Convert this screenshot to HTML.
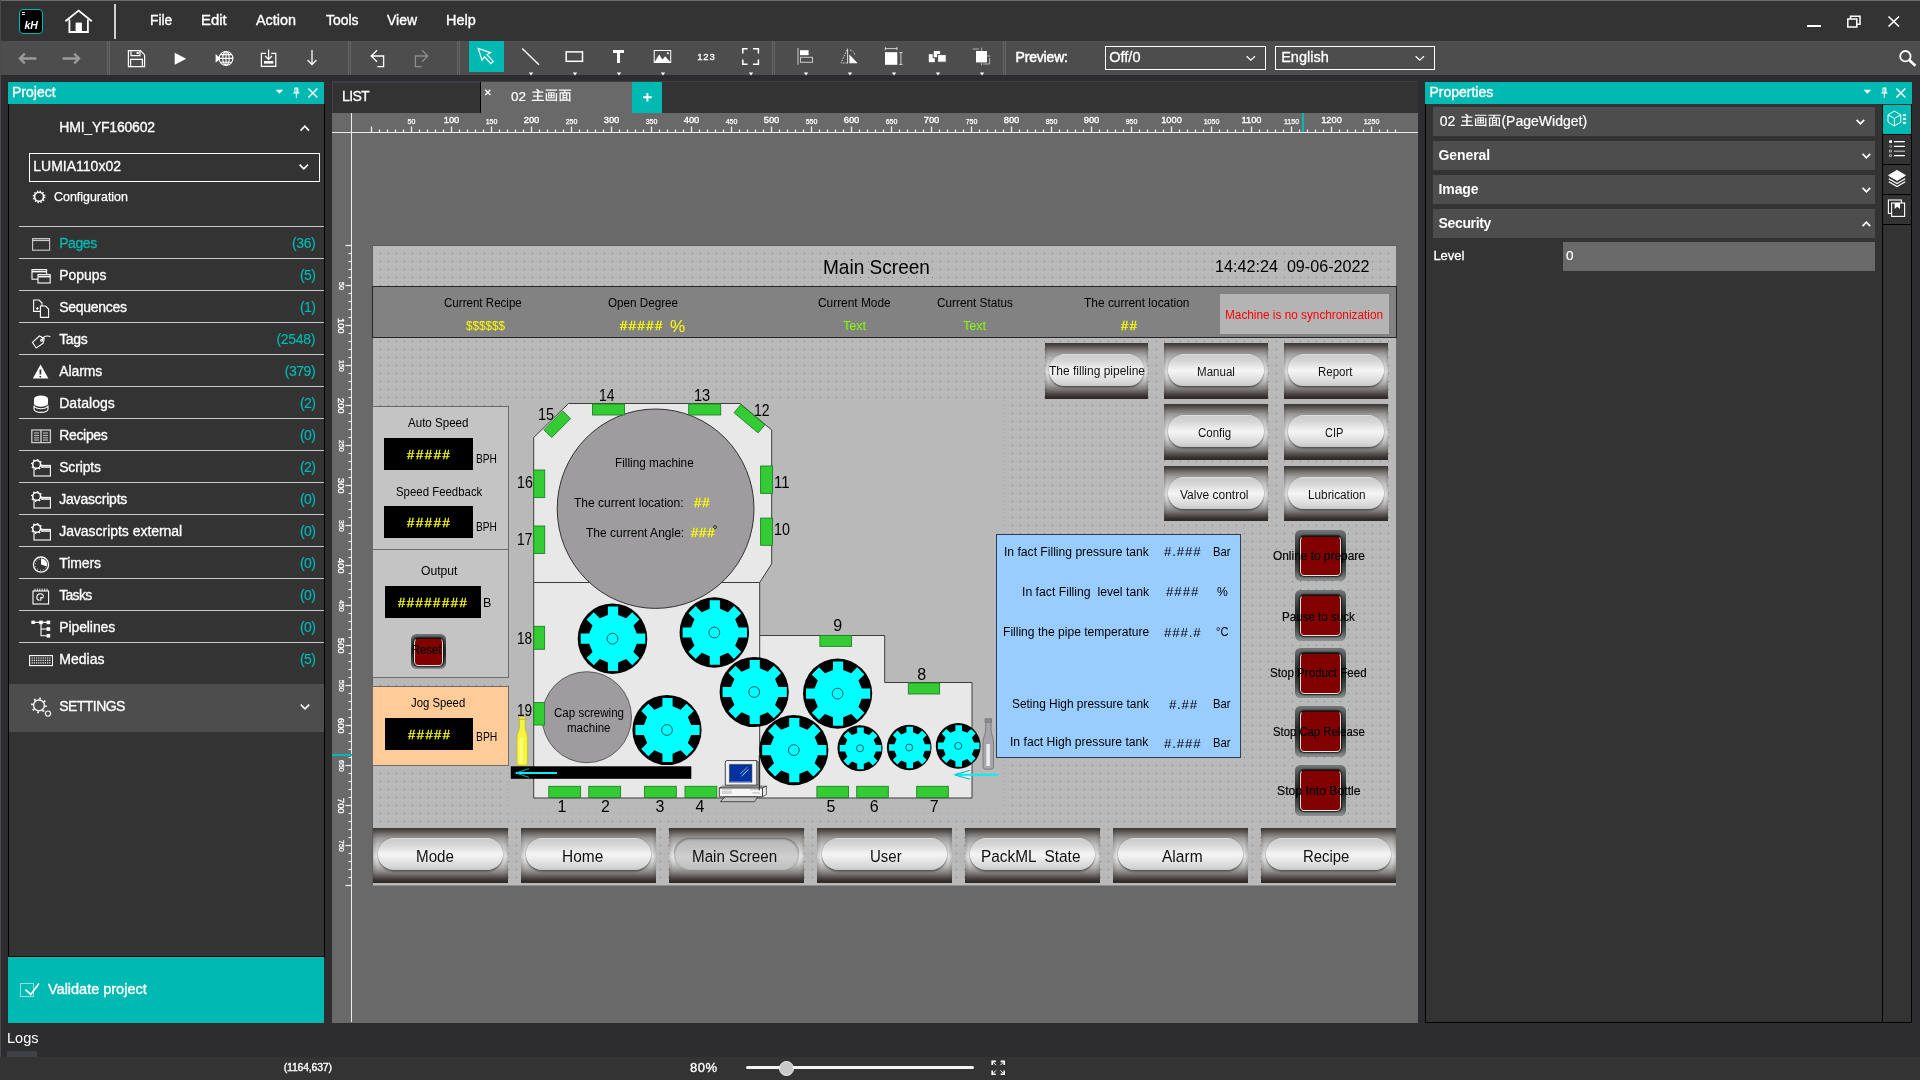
<!DOCTYPE html>
<html><head><meta charset="utf-8"><title>HMI Editor</title>
<style>
html,body{margin:0;padding:0;background:#2d2d30;overflow:hidden}
body{width:1920px;height:1080px;position:relative;font-family:"Liberation Sans",sans-serif}
.t{position:absolute;white-space:pre;display:block}
.r{position:absolute;box-sizing:border-box}
</style></head><body><div id="root" style="position:absolute;left:0;top:0;width:1920px;height:1080px;will-change:transform">
<div class="r" style="left:0px;top:0px;width:1920px;height:41px;background:#333333;"></div>
<div class="r" style="left:0px;top:0px;width:1920px;height:1px;background:#6a6a6a;"></div>
<div class="r" style="left:0px;top:41px;width:1920px;height:34px;background:#4d4d4d;"></div>
<div class="r" style="left:0px;top:0px;width:1px;height:1080px;background:#4a4a4a;"></div>
<div class="r" style="left:19px;top:9px;width:24px;height:25px;background:#000;border:1px solid #00b9b3;border-radius:4px"></div>
<span class="t" style="left:24.50px;top:20.05px;font:700 10.5px/1 'Liberation Sans',sans-serif;color:#fff;font-style:italic;">kH</span>
<div class="r" style="left:22px;top:12px;width:3px;height:1px;background:#ddd;"></div>
<div class="r" style="left:22px;top:14px;width:3px;height:1px;background:#ddd;"></div>
<svg class="r" style="left:62px;top:6px;" width="34" height="30" viewBox="0 0 34 30"><g fill="none" stroke="#fff" stroke-width="1.8" stroke-linejoin="miter"><path d="M3.4,15.2 L16.6,4.6 L29.8,15.2"/><path d="M7.4,13.5 V26 H25.9 V13.5"/></g><rect x="13.6" y="16.6" width="6.3" height="9" fill="#fff"/></svg>
<div class="r" style="left:114px;top:4px;width:2px;height:35px;background:#d0d0d0;"></div>
<span class="t" style="left:150.30px;top:12.95px;font:400 14.5px/1 'Liberation Sans',sans-serif;color:#fff;-webkit-text-stroke:0.35px #fff;transform-origin:0 0;transform:scaleX(0.9544);">File</span>
<span class="t" style="left:201.00px;top:12.95px;font:400 14.5px/1 'Liberation Sans',sans-serif;color:#fff;-webkit-text-stroke:0.35px #fff;transform-origin:0 0;transform:scaleX(1.0286);">Edit</span>
<span class="t" style="left:256.00px;top:12.95px;font:400 14.5px/1 'Liberation Sans',sans-serif;color:#fff;-webkit-text-stroke:0.35px #fff;transform-origin:0 0;transform:scaleX(0.9926);">Action</span>
<span class="t" style="left:325.70px;top:12.95px;font:400 14.5px/1 'Liberation Sans',sans-serif;color:#fff;-webkit-text-stroke:0.35px #fff;transform-origin:0 0;transform:scaleX(0.9631);">Tools</span>
<span class="t" style="left:386.70px;top:12.95px;font:400 14.5px/1 'Liberation Sans',sans-serif;color:#fff;-webkit-text-stroke:0.35px #fff;transform-origin:0 0;transform:scaleX(0.9626);">View</span>
<span class="t" style="left:446.00px;top:12.95px;font:400 14.5px/1 'Liberation Sans',sans-serif;color:#fff;-webkit-text-stroke:0.35px #fff;transform-origin:0 0;transform:scaleX(0.9959);">Help</span>
<div class="r" style="left:1807px;top:25px;width:14px;height:2px;background:#fff;"></div>
<svg class="r" style="left:1846px;top:14px;" width="16" height="15" viewBox="0 0 16 15"><g fill="none" stroke="#fff" stroke-width="1.5"><rect x="1.8" y="5" width="9" height="8"/><path d="M4.5,5 V2.3 H14 V10.3 H10.8"/></g></svg>
<svg class="r" style="left:1887px;top:15px;" width="14" height="13" viewBox="0 0 14 13"><path d="M1.5,1.5 L12,11.5 M12,1.5 L1.5,11.5" stroke="#fff" stroke-width="1.7" fill="none"/></svg>
<div class="r" style="left:107px;top:41px;width:1px;height:34px;background:#666;"></div>
<div class="r" style="left:109px;top:41px;width:1px;height:34px;background:#666;"></div>
<div class="r" style="left:348px;top:41px;width:1px;height:34px;background:#666;"></div>
<div class="r" style="left:350px;top:41px;width:1px;height:34px;background:#666;"></div>
<div class="r" style="left:457px;top:41px;width:1px;height:34px;background:#666;"></div>
<div class="r" style="left:459px;top:41px;width:1px;height:34px;background:#666;"></div>
<div class="r" style="left:772px;top:41px;width:1px;height:34px;background:#666;"></div>
<div class="r" style="left:774px;top:41px;width:1px;height:34px;background:#666;"></div>
<div class="r" style="left:1003px;top:41px;width:1px;height:34px;background:#666;"></div>
<div class="r" style="left:1005px;top:41px;width:1px;height:34px;background:#666;"></div>
<svg class="r" style="left:17px;top:51px;" width="21" height="15" viewBox="0 0 21 15"><path d="M19.4,7.5 H3.4 M7.8,2.6 L2.9,7.5 L7.8,12.4" fill="none" stroke="#9a9a9a" stroke-width="2.3"/></svg>
<svg class="r" style="left:61px;top:51px;" width="21" height="15" viewBox="0 0 21 15"><path d="M1.6,7.5 H17.6 M13.2,2.6 L18.1,7.5 L13.2,12.4" fill="none" stroke="#9a9a9a" stroke-width="2.3"/></svg>
<svg class="r" style="left:126px;top:48px;" width="21" height="21" viewBox="0 0 21 21"><g fill="none" stroke="#fff" stroke-width="1.2"><path d="M2.4,2.6 H14.3 L18.6,6.9 V18.6 H2.4 Z"/><path d="M5,2.6 V7.6 H14 V2.6"/><path d="M4.6,18.6 V11.4 H16.4 V18.6"/></g><rect x="10.6" y="4" width="2.2" height="2" fill="#fff"/></svg>
<svg class="r" style="left:173px;top:51px;" width="15" height="15" viewBox="0 0 15 15"><path d="M1.7,1.7 L13.2,7.7 L1.7,13.7 Z" fill="#fff"/></svg>
<svg class="r" style="left:214px;top:49px;" width="21" height="19" viewBox="0 0 21 19"><path d="M1.6,5 L6.6,9.4 L1.6,13.8 Z" fill="#fff"/><g fill="none" stroke="#fff" stroke-width="1.1"><circle cx="12" cy="9.4" r="6.9"/><ellipse cx="12" cy="9.4" rx="3.2" ry="6.9"/><path d="M12,2.5 V16.3 M5.1,9.4 H18.9 M6.3,5.6 H17.7 M6.3,13.2 H17.7"/></g></svg>
<svg class="r" style="left:259px;top:48px;" width="19" height="20" viewBox="0 0 19 20"><g fill="none" stroke="#fff" stroke-width="1.2"><path d="M7,5.3 H2.4 V18.4 H16.8 V5.3 H12.2"/><path d="M9.6,1.6 V11.2 M6.2,8 L9.6,11.4 L13,8"/></g><rect x="5" y="13" width="9.3" height="2.6" fill="#fff"/></svg>
<svg class="r" style="left:305px;top:48px;" width="14" height="19" viewBox="0 0 14 19"><path d="M7,2 V16.5 M2.6,12 L7,16.6 L11.4,12" fill="none" stroke="#fff" stroke-width="1.3"/></svg>
<svg class="r" style="left:369px;top:48px;" width="17" height="21" viewBox="0 0 17 21"><path d="M2.4,8 H14.6 V18.6 H8.3 M8,2.2 L2.2,8 L8,13.8" fill="none" stroke="#fff" stroke-width="1.3"/></svg>
<svg class="r" style="left:413px;top:48px;" width="17" height="21" viewBox="0 0 17 21"><path d="M14.6,8 H2.4 V18.6 H8.7 M9,2.2 L14.8,8 L9,13.8" fill="none" stroke="#8c8c8c" stroke-width="1.3"/></svg>
<div class="r" style="left:469px;top:41px;width:35px;height:31px;background:#00b9b3;"></div>
<svg class="r" style="left:475px;top:45px;" width="23" height="23" viewBox="0 0 23 23"><path d="M3.2,3.4 L7,15.2 L9.6,11.8 L15.8,18.6 L18.2,16.4 L12,9.6 L15.6,7.6 Z" fill="none" stroke="#fff" stroke-width="1.2" stroke-linejoin="miter"/></svg>
<svg class="r" style="left:520px;top:46px;" width="22" height="22" viewBox="0 0 22 22"><path d="M2.2,2.6 L19,18.8" stroke="#fff" stroke-width="1.4"/></svg>
<svg class="r" style="left:564px;top:49px;" width="21" height="15" viewBox="0 0 21 15"><rect x="2.2" y="2.9" width="16.3" height="9.4" fill="none" stroke="#fff" stroke-width="1.5"/></svg>
<div class="r" style="left:613px;top:50px;width:11.3px;height:2.8px;background:#fff;"></div>
<div class="r" style="left:617.3px;top:50px;width:2.7px;height:12.8px;background:#fff;"></div>
<svg class="r" style="left:652px;top:48px;" width="21" height="17" viewBox="0 0 21 17"><rect x="2.2" y="2.5" width="16.5" height="12" fill="none" stroke="#fff" stroke-width="1"/><path d="M2.4,14.4 L7.2,6.6 L10.4,11.4 L13.2,8.2 L18.5,14.4 Z" fill="#fff"/><circle cx="15.8" cy="5.2" r="1" fill="#fff"/></svg>
<span class="t" style="left:697.30px;top:51.75px;font:400 9.5px/1 'Liberation Sans',sans-serif;color:#fff;letter-spacing:0.783px;-webkit-text-stroke:0.3px #fff;">123</span>
<svg class="r" style="left:741px;top:47px;" width="20" height="19" viewBox="0 0 20 19"><path d="M1.8,6.4 V1.8 H6.6 M12,1.8 H17.4 V6.4 M17.4,12.4 V17.2 H12 M6.6,17.2 H1.8 V12.4" fill="none" stroke="#fff" stroke-width="1.5"/></svg>
<svg class="r" style="left:796px;top:47px;" width="19" height="19" viewBox="0 0 19 19"><path d="M2,1 V17.8" stroke="#ccc" stroke-width="1"/><rect x="4" y="3.2" width="8.6" height="5" fill="#fff"/><rect x="4.5" y="10.3" width="12" height="5" fill="none" stroke="#ccc" stroke-width="1"/></svg>
<svg class="r" style="left:839px;top:47px;" width="21" height="19" viewBox="0 0 21 19"><path d="M7.8,3 L2,16 H7.8" fill="none" stroke="#ddd" stroke-width="1" stroke-dasharray="1.5,1.2"/><path d="M8.6,1.6 V16.6" stroke="#ddd" stroke-width="1"/><path d="M10.4,7.6 V16.2 H18.6 Z" fill="#fff"/><path d="M11,3 C14,3.6 15.4,5.6 15.8,8" fill="none" stroke="#ddd" stroke-width="0.9" stroke-dasharray="1.5,1.2"/></svg>
<svg class="r" style="left:883px;top:46px;" width="21" height="20" viewBox="0 0 21 20"><rect x="2" y="6.2" width="12.3" height="12.6" fill="#fff"/><path d="M2,2.6 H14.3 M2.4,1 V4.2 M13.9,1 V4.2 M17.9,6.2 V18.8 M16.2,6.6 H19.6 M16.2,18.4 H19.6" stroke="#ddd" stroke-width="0.9" fill="none"/></svg>
<svg class="r" style="left:927px;top:49px;" width="21" height="15" viewBox="0 0 21 15"><rect x="1.8" y="5.2" width="6" height="8" fill="#fff"/><rect x="6.2" y="1.6" width="7.4" height="7.2" fill="#fff" stroke="#4d4d4d" stroke-width="1"/><rect x="10.6" y="5.6" width="8.6" height="7.6" fill="#fff" stroke="#4d4d4d" stroke-width="1"/></svg>
<svg class="r" style="left:971px;top:46px;" width="21" height="20" viewBox="0 0 21 20"><rect x="5" y="5" width="11" height="11.4" fill="#fff"/><path d="M10.6,1.6 V5 M1.6,3 H8 M16,10 H19.4 M10.4,16.4 V19.4 M12,18 H18.6 V12" stroke="#bbb" stroke-width="0.9" fill="none"/></svg>
<svg class="r" style="left:528px;top:71.8px;" width="6" height="4" viewBox="0 0 6 4"><path d="M0.8,0.6 H5.2 L3,3.6 Z" fill="#fff"/></svg>
<svg class="r" style="left:572px;top:71.8px;" width="6" height="4" viewBox="0 0 6 4"><path d="M0.8,0.6 H5.2 L3,3.6 Z" fill="#fff"/></svg>
<svg class="r" style="left:615.8px;top:71.8px;" width="6" height="4" viewBox="0 0 6 4"><path d="M0.8,0.6 H5.2 L3,3.6 Z" fill="#fff"/></svg>
<svg class="r" style="left:660px;top:71.8px;" width="6" height="4" viewBox="0 0 6 4"><path d="M0.8,0.6 H5.2 L3,3.6 Z" fill="#fff"/></svg>
<svg class="r" style="left:747.8px;top:71.8px;" width="6" height="4" viewBox="0 0 6 4"><path d="M0.8,0.6 H5.2 L3,3.6 Z" fill="#fff"/></svg>
<svg class="r" style="left:802.8px;top:71.8px;" width="6" height="4" viewBox="0 0 6 4"><path d="M0.8,0.6 H5.2 L3,3.6 Z" fill="#fff"/></svg>
<svg class="r" style="left:847px;top:71.8px;" width="6" height="4" viewBox="0 0 6 4"><path d="M0.8,0.6 H5.2 L3,3.6 Z" fill="#fff"/></svg>
<svg class="r" style="left:891px;top:71.8px;" width="6" height="4" viewBox="0 0 6 4"><path d="M0.8,0.6 H5.2 L3,3.6 Z" fill="#fff"/></svg>
<svg class="r" style="left:935px;top:71.8px;" width="6" height="4" viewBox="0 0 6 4"><path d="M0.8,0.6 H5.2 L3,3.6 Z" fill="#fff"/></svg>
<svg class="r" style="left:979px;top:71.8px;" width="6" height="4" viewBox="0 0 6 4"><path d="M0.8,0.6 H5.2 L3,3.6 Z" fill="#fff"/></svg>
<span class="t" style="left:1015.50px;top:49.80px;font:400 14px/1 'Liberation Sans',sans-serif;color:#fff;letter-spacing:-0.173px;-webkit-text-stroke:0.5px #fff;">Preview:</span>
<div class="r" style="left:1105px;top:46px;width:160.5px;height:24px;border:1px solid #fff;background:#4d4d4d"></div>
<span class="t" style="left:1109.30px;top:49.75px;font:400 14.5px/1 'Liberation Sans',sans-serif;color:#fff;-webkit-text-stroke:0.3px #fff;">Off/0</span>
<svg class="r" style="left:1244.5px;top:55px;" width="12" height="7" viewBox="0 0 12 7"><path d="M1.6,1.2 L5.8,5.2 L10,1.2" fill="none" stroke="#fff" stroke-width="1.2"/></svg>
<div class="r" style="left:1275px;top:46px;width:160px;height:24px;border:1px solid #fff;background:#4d4d4d"></div>
<span class="t" style="left:1281.20px;top:49.75px;font:400 14.5px/1 'Liberation Sans',sans-serif;color:#fff;-webkit-text-stroke:0.3px #fff;">English</span>
<svg class="r" style="left:1414px;top:55px;" width="12" height="7" viewBox="0 0 12 7"><path d="M1.6,1.2 L5.8,5.2 L10,1.2" fill="none" stroke="#fff" stroke-width="1.2"/></svg>
<svg class="r" style="left:1898px;top:49px;" width="20" height="19" viewBox="0 0 20 19"><circle cx="7.4" cy="7.2" r="5.2" fill="none" stroke="#fff" stroke-width="1.8"/><path d="M11.2,11 L17.4,16.8" stroke="#fff" stroke-width="2.6"/></svg>
<div class="r" style="left:8px;top:82px;width:316px;height:22px;background:#00b9b3;"></div>
<span class="t" style="left:12.00px;top:84.80px;font:400 14px/1 'Liberation Sans',sans-serif;color:#fff;-webkit-text-stroke:0.35px #fff;">Project</span>
<svg class="r" style="left:275px;top:89px;" width="9" height="6" viewBox="0 0 9 6"><path d="M0.6,0.8 H8.2 L4.4,4.8 Z" fill="#fff"/></svg>
<svg class="r" style="left:292px;top:87px;" width="9" height="12" viewBox="0 0 9 12"><path d="M2.6,1 H6.2 M3,1 V5.6 M5.8,1 V5.6 M1.2,6 H7.6 M4.4,6 V11" stroke="#fff" stroke-width="1.1" fill="none"/><rect x="4.4" y="1" width="1.6" height="5" fill="#fff"/></svg>
<svg class="r" style="left:307px;top:87px;" width="12" height="12" viewBox="0 0 12 12"><path d="M1.4,1.4 L10.4,10.4 M10.4,1.4 L1.4,10.4" stroke="#fff" stroke-width="1.4"/></svg>
<div class="r" style="left:8px;top:104px;width:317px;height:853px;background:#333;border:1px solid #000;border-top:none"></div>
<span class="t" style="left:59.30px;top:119.80px;font:400 14px/1 'Liberation Sans',sans-serif;color:#fff;letter-spacing:-0.213px;-webkit-text-stroke:0.3px #fff;">HMI_YF160602</span>
<svg class="r" style="left:299px;top:124px;" width="12" height="8" viewBox="0 0 12 8"><path d="M1.6,6.6 L5.8,2.2 L10,6.6" fill="none" stroke="#fff" stroke-width="1.6"/></svg>
<div class="r" style="left:29px;top:153px;width:291px;height:28.5px;border:1px solid #fff"></div>
<span class="t" style="left:33.30px;top:159.00px;font:400 14px/1 'Liberation Sans',sans-serif;color:#fff;-webkit-text-stroke:0.3px #fff;">LUMIA110x02</span>
<svg class="r" style="left:298px;top:163px;" width="12" height="8" viewBox="0 0 12 8"><path d="M1.6,1.6 L5.8,5.8 L10,1.6" fill="none" stroke="#fff" stroke-width="1.6"/></svg>
<svg class="r" style="left:31px;top:189px;" width="16" height="16" viewBox="0 0 16 16"><circle cx="8.06" cy="7.75" r="4.5" fill="none" stroke="#fff" stroke-width="1.7"/><circle cx="8.06" cy="7.75" r="5.75" fill="none" stroke="#fff" stroke-width="1.3" stroke-dasharray="1.35,1.66"/></svg>
<span class="t" style="left:54.20px;top:189.70px;font:400 13.2px/1 'Liberation Sans',sans-serif;color:#fff;-webkit-text-stroke:0.25px #fff;transform-origin:0 0;transform:scaleX(0.9425);">Configuration</span>
<div class="r" style="left:19px;top:226px;width:305px;height:1.4px;background:#c8c8c8;"></div>
<span class="t" style="left:59.20px;top:236.20px;font:400 14px/1 'Liberation Sans',sans-serif;color:#00b9b3;letter-spacing:-0.419px;-webkit-text-stroke:0.3px #00b9b3;">Pages</span>
<span class="t" style="left:292.10px;top:236.20px;font:400 14px/1 'Liberation Sans',sans-serif;color:#00b9b3;letter-spacing:-0.449px;-webkit-text-stroke:0.15px #00b9b3;">(36)</span>
<svg class="r" style="left:31px;top:234.5px;" width="24" height="20" viewBox="0 0 24 20"><rect x="1.6" y="3.6" width="17" height="11.6" fill="none" stroke="#ccc" stroke-width="1.1"/><path d="M1.6,5.4 H18.6" stroke="#ccc" stroke-width="1.4"/></svg>
<div class="r" style="left:19px;top:258px;width:305px;height:1.4px;background:#c8c8c8;"></div>
<span class="t" style="left:59.20px;top:268.20px;font:400 14px/1 'Liberation Sans',sans-serif;color:#fff;letter-spacing:-0.014px;-webkit-text-stroke:0.3px #fff;">Popups</span>
<span class="t" style="left:300.10px;top:268.20px;font:400 14px/1 'Liberation Sans',sans-serif;color:#00b9b3;letter-spacing:-0.670px;-webkit-text-stroke:0.15px #00b9b3;">(5)</span>
<svg class="r" style="left:31px;top:266.5px;" width="24" height="20" viewBox="0 0 24 20"><rect x="1" y="2.6" width="14.6" height="9.6" stroke="#fff" fill="none" stroke-width="1.1"/><path d="M1,4.6 H15.6" stroke="#fff" stroke-width="1.6"/><rect x="7" y="7.6" width="12.2" height="8.4" fill="#333" stroke="#fff" stroke-width="1.1"/><path d="M7,9.6 H19.2" stroke="#fff" stroke-width="1.6"/></svg>
<div class="r" style="left:19px;top:290px;width:305px;height:1.4px;background:#c8c8c8;"></div>
<span class="t" style="left:59.20px;top:300.20px;font:400 14px/1 'Liberation Sans',sans-serif;color:#fff;letter-spacing:-0.284px;-webkit-text-stroke:0.3px #fff;">Sequences</span>
<span class="t" style="left:300.10px;top:300.20px;font:400 14px/1 'Liberation Sans',sans-serif;color:#00b9b3;letter-spacing:-0.670px;-webkit-text-stroke:0.15px #00b9b3;">(1)</span>
<svg class="r" style="left:31px;top:298.5px;" width="24" height="20" viewBox="0 0 24 20"><path d="M2.6,1 H8 L11,4 V12.4 H2.6 Z" stroke="#fff" fill="none" stroke-width="1.1"/><path d="M9.4,7 H14.6 L17.6,10 V18.4 H9.4 Z" fill="#333" stroke="#fff" stroke-width="1.1"/><path d="M5,9.4 H7.6 M6.3,8 V10.8" stroke="#fff" stroke-width="1"/></svg>
<div class="r" style="left:19px;top:322px;width:305px;height:1.4px;background:#c8c8c8;"></div>
<span class="t" style="left:59.20px;top:332.20px;font:400 14px/1 'Liberation Sans',sans-serif;color:#fff;letter-spacing:-0.368px;-webkit-text-stroke:0.3px #fff;">Tags</span>
<span class="t" style="left:276.40px;top:332.20px;font:400 14px/1 'Liberation Sans',sans-serif;color:#00b9b3;letter-spacing:-0.278px;-webkit-text-stroke:0.15px #00b9b3;">(2548)</span>
<svg class="r" style="left:31px;top:330.5px;" width="24" height="20" viewBox="0 0 24 20"><path d="M1.4,11.4 L8.4,5 L13.2,7.4 L12.2,12.2 L5.2,17 Z" stroke="#fff" fill="none" stroke-width="1.1"/><circle cx="10.6" cy="9.2" r="1" stroke="#fff" fill="none" stroke-width="1.1"/><path d="M10.8,8.8 C12,5 16,4.4 19.4,5.6" stroke="#fff" fill="none" stroke-width="1.1"/></svg>
<div class="r" style="left:19px;top:354px;width:305px;height:1.4px;background:#c8c8c8;"></div>
<span class="t" style="left:59.20px;top:364.20px;font:400 14px/1 'Liberation Sans',sans-serif;color:#fff;letter-spacing:-0.093px;-webkit-text-stroke:0.3px #fff;">Alarms</span>
<span class="t" style="left:284.70px;top:364.20px;font:400 14px/1 'Liberation Sans',sans-serif;color:#00b9b3;letter-spacing:-0.437px;-webkit-text-stroke:0.15px #00b9b3;">(379)</span>
<svg class="r" style="left:31px;top:362.5px;" width="24" height="20" viewBox="0 0 24 20"><path d="M9.6,1.6 L17.4,15.4 H1.8 Z" fill="#fff"/><path d="M9.4,6.4 V11.6 M9.4,13 V14.6" stroke="#333" stroke-width="1.7"/></svg>
<div class="r" style="left:19px;top:386px;width:305px;height:1.4px;background:#c8c8c8;"></div>
<span class="t" style="left:59.20px;top:396.20px;font:400 14px/1 'Liberation Sans',sans-serif;color:#fff;letter-spacing:0.056px;-webkit-text-stroke:0.3px #fff;">Datalogs</span>
<span class="t" style="left:300.10px;top:396.20px;font:400 14px/1 'Liberation Sans',sans-serif;color:#00b9b3;letter-spacing:-0.670px;-webkit-text-stroke:0.15px #00b9b3;">(2)</span>
<svg class="r" style="left:31px;top:394.5px;" width="24" height="20" viewBox="0 0 24 20"><ellipse cx="10" cy="3.8" rx="7" ry="3.2" fill="#fff"/><path d="M3,3.8 V8.6 A7,3.2 0 0 0 17,8.6 V3.8" fill="#fff"/><path d="M3,10.6 V14.2 A7,3.2 0 0 0 17,14.2 V10.6 A7,3.2 0 0 1 3,10.6Z" fill="none" stroke="#fff" stroke-width="1.1"/></svg>
<div class="r" style="left:19px;top:418px;width:305px;height:1.4px;background:#c8c8c8;"></div>
<span class="t" style="left:59.20px;top:428.20px;font:400 14px/1 'Liberation Sans',sans-serif;color:#fff;letter-spacing:-0.326px;-webkit-text-stroke:0.3px #fff;">Recipes</span>
<span class="t" style="left:300.10px;top:428.20px;font:400 14px/1 'Liberation Sans',sans-serif;color:#00b9b3;letter-spacing:-0.670px;-webkit-text-stroke:0.15px #00b9b3;">(0)</span>
<svg class="r" style="left:31px;top:426.5px;" width="24" height="20" viewBox="0 0 24 20"><rect x="0.8" y="3" width="18.6" height="12.6" fill="none" stroke="#ccc" stroke-width="1.3"/><path d="M10,3 V15.6" stroke="#ccc" stroke-width="1.4"/><path d="M3,6 H8 M3,8.4 H8 M3,10.8 H8 M3,13 H8 M12,6 H17 M12,8.4 H17 M12,10.8 H17 M12,13 H17" stroke="#ccc" stroke-width="1"/></svg>
<div class="r" style="left:19px;top:450px;width:305px;height:1.4px;background:#c8c8c8;"></div>
<span class="t" style="left:59.20px;top:460.20px;font:400 14px/1 'Liberation Sans',sans-serif;color:#fff;letter-spacing:-0.155px;-webkit-text-stroke:0.3px #fff;">Scripts</span>
<span class="t" style="left:300.10px;top:460.20px;font:400 14px/1 'Liberation Sans',sans-serif;color:#00b9b3;letter-spacing:-0.670px;-webkit-text-stroke:0.15px #00b9b3;">(2)</span>
<svg class="r" style="left:31px;top:458.5px;" width="24" height="20" viewBox="0 0 24 20"><rect x="3" y="6.4" width="16.4" height="10.6" stroke="#fff" fill="none" stroke-width="1.1"/><path d="M10,8 H19" stroke="#fff" stroke-width="1.5"/><circle cx="5.6" cy="5.4" r="3.9" fill="#333" stroke="#fff" stroke-width="1.5"/><circle cx="5.6" cy="5.4" r="5" fill="none" stroke="#fff" stroke-width="1.4" stroke-dasharray="1.3,2.6"/></svg>
<div class="r" style="left:19px;top:482px;width:305px;height:1.4px;background:#c8c8c8;"></div>
<span class="t" style="left:59.20px;top:492.20px;font:400 14px/1 'Liberation Sans',sans-serif;color:#fff;letter-spacing:-0.184px;-webkit-text-stroke:0.3px #fff;">Javascripts</span>
<span class="t" style="left:300.10px;top:492.20px;font:400 14px/1 'Liberation Sans',sans-serif;color:#00b9b3;letter-spacing:-0.670px;-webkit-text-stroke:0.15px #00b9b3;">(0)</span>
<svg class="r" style="left:31px;top:490.5px;" width="24" height="20" viewBox="0 0 24 20"><rect x="3" y="6.4" width="16.4" height="10.6" stroke="#fff" fill="none" stroke-width="1.1"/><path d="M10,8 H19" stroke="#fff" stroke-width="1.5"/><circle cx="5.6" cy="5.4" r="3.9" fill="#333" stroke="#fff" stroke-width="1.5"/><circle cx="5.6" cy="5.4" r="5" fill="none" stroke="#fff" stroke-width="1.4" stroke-dasharray="1.3,2.6"/></svg>
<div class="r" style="left:19px;top:514px;width:305px;height:1.4px;background:#c8c8c8;"></div>
<span class="t" style="left:59.20px;top:524.20px;font:400 14px/1 'Liberation Sans',sans-serif;color:#fff;letter-spacing:-0.036px;-webkit-text-stroke:0.3px #fff;">Javascripts external</span>
<span class="t" style="left:300.10px;top:524.20px;font:400 14px/1 'Liberation Sans',sans-serif;color:#00b9b3;letter-spacing:-0.670px;-webkit-text-stroke:0.15px #00b9b3;">(0)</span>
<svg class="r" style="left:31px;top:522.5px;" width="24" height="20" viewBox="0 0 24 20"><rect x="3" y="6.4" width="16.4" height="10.6" stroke="#fff" fill="none" stroke-width="1.1"/><path d="M10,8 H19" stroke="#fff" stroke-width="1.5"/><circle cx="5.6" cy="5.4" r="3.9" fill="#333" stroke="#fff" stroke-width="1.5"/><circle cx="5.6" cy="5.4" r="5" fill="none" stroke="#fff" stroke-width="1.4" stroke-dasharray="1.3,2.6"/></svg>
<div class="r" style="left:19px;top:546px;width:305px;height:1.4px;background:#c8c8c8;"></div>
<span class="t" style="left:59.20px;top:556.20px;font:400 14px/1 'Liberation Sans',sans-serif;color:#fff;letter-spacing:-0.092px;-webkit-text-stroke:0.3px #fff;">Timers</span>
<span class="t" style="left:300.10px;top:556.20px;font:400 14px/1 'Liberation Sans',sans-serif;color:#00b9b3;letter-spacing:-0.670px;-webkit-text-stroke:0.15px #00b9b3;">(0)</span>
<svg class="r" style="left:31px;top:554.5px;" width="24" height="20" viewBox="0 0 24 20"><circle cx="10" cy="9.6" r="7.6" fill="none" stroke="#fff" stroke-width="1.3"/><path d="M10,9.6 L10,3.4 A6.2,6.2 0 0 1 15.8,11.6 Z" fill="#fff"/><circle cx="10" cy="9.6" r="5.6" fill="none" stroke="#fff" stroke-width="1" stroke-dasharray="0.8,2.13"/></svg>
<div class="r" style="left:19px;top:578px;width:305px;height:1.4px;background:#c8c8c8;"></div>
<span class="t" style="left:59.20px;top:588.20px;font:400 14px/1 'Liberation Sans',sans-serif;color:#fff;letter-spacing:-0.697px;-webkit-text-stroke:0.3px #fff;">Tasks</span>
<span class="t" style="left:300.10px;top:588.20px;font:400 14px/1 'Liberation Sans',sans-serif;color:#00b9b3;letter-spacing:-0.670px;-webkit-text-stroke:0.15px #00b9b3;">(0)</span>
<svg class="r" style="left:31px;top:586.5px;" width="24" height="20" viewBox="0 0 24 20"><rect x="2" y="4" width="15.6" height="13" stroke="#fff" fill="none" stroke-width="1.1"/><path d="M4,1.6 V4 M6.4,1.6 V4 M8.8,1.6 V4 M11.2,1.6 V4 M13.6,1.6 V4 M16,1.6 V4" stroke="#fff" stroke-width="0.9"/><path d="M8.4,13.4 A3.4,3.4 0 1 1 12.6,9.6 M9.8,13.8 V10.6 H12.4" stroke="#fff" fill="none" stroke-width="1.1"/></svg>
<div class="r" style="left:19px;top:610px;width:305px;height:1.4px;background:#c8c8c8;"></div>
<span class="t" style="left:59.20px;top:620.20px;font:400 14px/1 'Liberation Sans',sans-serif;color:#fff;letter-spacing:-0.090px;-webkit-text-stroke:0.3px #fff;">Pipelines</span>
<span class="t" style="left:300.10px;top:620.20px;font:400 14px/1 'Liberation Sans',sans-serif;color:#00b9b3;letter-spacing:-0.670px;-webkit-text-stroke:0.15px #00b9b3;">(0)</span>
<svg class="r" style="left:31px;top:618.5px;" width="24" height="20" viewBox="0 0 24 20"><path d="M2,3.4 H16 M10,3.4 V16.8 H17 M10,10 H17" stroke="#fff" stroke-width="1.1" fill="none"/><rect x="0.4" y="1.6" width="3.4" height="3.4" fill="#fff"/><rect x="8.2" y="1.6" width="3.6" height="3.6" fill="#fff"/><rect x="15.6" y="1.6" width="3.6" height="3.6" fill="#fff"/><rect x="15.6" y="8.2" width="3.6" height="3.6" fill="#fff"/><rect x="15.6" y="15" width="3.6" height="3.6" fill="#fff"/></svg>
<div class="r" style="left:19px;top:642px;width:305px;height:1.4px;background:#c8c8c8;"></div>
<span class="t" style="left:59.20px;top:652.20px;font:400 14px/1 'Liberation Sans',sans-serif;color:#fff;letter-spacing:0.028px;-webkit-text-stroke:0.3px #fff;">Medias</span>
<span class="t" style="left:300.10px;top:652.20px;font:400 14px/1 'Liberation Sans',sans-serif;color:#00b9b3;letter-spacing:-0.670px;-webkit-text-stroke:0.15px #00b9b3;">(5)</span>
<svg class="r" style="left:29px;top:650.5px;" width="24" height="20" viewBox="0 0 24 20"><rect x="0.6" y="4.6" width="23" height="10" fill="none" stroke="#fff" stroke-width="1.1"/><path d="M2.6,7 H21.6 M2.6,9.4 H21.6 M2.6,11.8 H21.6" stroke="#fff" stroke-width="1.2" stroke-dasharray="1.2,1"/></svg>
<div class="r" style="left:9px;top:684px;width:315px;height:48px;background:#4d4d4d;"></div>
<svg class="r" style="left:30px;top:696px;" width="24" height="22" viewBox="0 0 24 22"><circle cx="9" cy="9.4" r="5.4" fill="none" stroke="#fff" stroke-width="1.3"/><circle cx="9" cy="9.4" r="7" fill="none" stroke="#fff" stroke-width="1.8" stroke-dasharray="1.7,3.8"/><circle cx="18" cy="17.6" r="2.6" fill="#4d4d4d" stroke="#fff" stroke-width="1.1"/></svg>
<span class="t" style="left:59.30px;top:698.80px;font:400 14px/1 'Liberation Sans',sans-serif;color:#fff;letter-spacing:-0.563px;-webkit-text-stroke:0.3px #fff;">SETTINGS</span>
<svg class="r" style="left:299px;top:703px;" width="12" height="8" viewBox="0 0 12 8"><path d="M1.8,1.6 L6,5.8 L10.2,1.6" fill="none" stroke="#fff" stroke-width="1.6"/></svg>
<div class="r" style="left:8px;top:957px;width:316.4px;height:66px;background:#00b9b3;"></div>
<div class="r" style="left:20px;top:982.5px;width:14px;height:14.5px;border:1px solid rgba(255,255,255,.55)"></div>
<svg class="r" style="left:22px;top:981px;" width="20" height="17" viewBox="0 0 20 17"><path d="M3.4,8.6 L8.8,13.4 L17,2.4" fill="none" stroke="#fff" stroke-width="1.7"/></svg>
<span class="t" style="left:48.00px;top:982.25px;font:400 14.5px/1 'Liberation Sans',sans-serif;color:#fff;letter-spacing:-0.011px;-webkit-text-stroke:0.35px #fff;">Validate project</span>
<div class="r" style="left:1425px;top:82px;width:487px;height:22px;background:#00b9b3;"></div>
<span class="t" style="left:1429.40px;top:84.80px;font:400 14px/1 'Liberation Sans',sans-serif;color:#fff;-webkit-text-stroke:0.35px #fff;">Properties</span>
<svg class="r" style="left:1863px;top:89px;" width="9" height="6" viewBox="0 0 9 6"><path d="M0.6,0.8 H8.2 L4.4,4.8 Z" fill="#fff"/></svg>
<svg class="r" style="left:1880px;top:87px;" width="9" height="12" viewBox="0 0 9 12"><path d="M2.6,1 H6.2 M3,1 V5.6 M5.8,1 V5.6 M1.2,6 H7.6 M4.4,6 V11" stroke="#fff" stroke-width="1.1" fill="none"/><rect x="4.4" y="1" width="1.6" height="5" fill="#fff"/></svg>
<svg class="r" style="left:1895px;top:87px;" width="12" height="12" viewBox="0 0 12 12"><path d="M1.4,1.4 L10.4,10.4 M10.4,1.4 L1.4,10.4" stroke="#fff" stroke-width="1.4"/></svg>
<div class="r" style="left:1425px;top:104px;width:487px;height:919px;background:#333;border:1px solid #000;border-top:none"></div>
<div class="r" style="left:1882px;top:104px;width:1px;height:918px;background:#000;"></div>
<div class="r" style="left:1433px;top:107px;width:442px;height:29px;background:#4d4d4d;"></div>
<span class="t" style="left:1439.80px;top:113.80px;font:400 14px/1 'Liberation Sans',sans-serif;color:#fff;-webkit-text-stroke:0.2px #fff;">02 </span>
<svg class="r" style="left:1459.56px;top:112.78px;overflow:visible" width="41.40" height="15.18" viewBox="0 -900 3000 1100" fill="#fff"><path transform="translate(0,0) scale(1,-1)" d="M361 789C416 749 482 693 523 649H99V556H448V356H148V265H448V41H54V-51H950V41H552V265H855V356H552V556H899V649H578L628 685C587 733 503 799 439 843Z"/><path transform="translate(1000,0) scale(1,-1)" d="M79 781V693H923V781ZM259 594V142H739V594ZM337 332H455V220H337ZM538 332H657V220H538ZM337 516H455V406H337ZM538 516H657V406H538ZM83 528V-35H823V-81H918V534H823V54H180V528Z"/><path transform="translate(2000,0) scale(1,-1)" d="M401 326H587V229H401ZM401 401V494H587V401ZM401 154H587V55H401ZM55 782V692H432C426 656 418 617 409 582H98V-84H190V-32H805V-84H901V582H507L542 692H949V782ZM190 55V494H315V55ZM805 55H673V494H805Z"/></svg>
<span class="t" style="left:1501.46px;top:113.80px;font:400 14px/1 'Liberation Sans',sans-serif;color:#fff;-webkit-text-stroke:0.2px #fff;">(PageWidget)</span>
<svg class="r" style="left:1855px;top:117.5px;" width="11" height="8" viewBox="0 0 11 8"><path d="M1.6,1.8 L5.4,5.8 L9.2,1.8" fill="none" stroke="#fff" stroke-width="1.7"/></svg>
<div class="r" style="left:1433px;top:141px;width:442px;height:29px;background:#4d4d4d;"></div>
<svg class="r" style="left:1860.5px;top:152px;" width="11" height="8" viewBox="0 0 11 8"><path d="M1.6,1.8 L5.4,5.8 L9.2,1.8" fill="none" stroke="#fff" stroke-width="1.7"/></svg>
<span class="t" style="left:1438.50px;top:147.80px;font:700 14px/1 'Liberation Sans',sans-serif;color:#fff;letter-spacing:-0.091px;">General</span>
<div class="r" style="left:1433px;top:175px;width:442px;height:29px;background:#4d4d4d;"></div>
<svg class="r" style="left:1860.5px;top:186px;" width="11" height="8" viewBox="0 0 11 8"><path d="M1.6,1.8 L5.4,5.8 L9.2,1.8" fill="none" stroke="#fff" stroke-width="1.7"/></svg>
<span class="t" style="left:1438.50px;top:181.80px;font:700 14px/1 'Liberation Sans',sans-serif;color:#fff;letter-spacing:-0.092px;">Image</span>
<div class="r" style="left:1433px;top:209px;width:442px;height:29px;background:#4d4d4d;"></div>
<svg class="r" style="left:1860.5px;top:220px;" width="11" height="8" viewBox="0 0 11 8"><path d="M1.6,6.2 L5.4,2.2 L9.2,6.2" fill="none" stroke="#fff" stroke-width="1.7"/></svg>
<span class="t" style="left:1438.50px;top:215.60px;font:700 14px/1 'Liberation Sans',sans-serif;color:#fff;letter-spacing:-0.344px;">Security</span>
<div class="r" style="left:1563px;top:242px;width:312px;height:29px;background:#696969;"></div>
<span class="t" style="left:1433.40px;top:249.00px;font:400 13px/1 'Liberation Sans',sans-serif;color:#fff;-webkit-text-stroke:0.3px #fff;">Level</span>
<span class="t" style="left:1566.00px;top:248.75px;font:400 13.5px/1 'Liberation Sans',sans-serif;color:#fff;-webkit-text-stroke:0.2px #fff;">0</span>
<div class="r" style="left:1883px;top:105px;width:28px;height:29px;background:#00b9b3;"></div>
<div class="r" style="left:1883px;top:134px;width:28px;height:1px;background:#000;"></div>
<div class="r" style="left:1883px;top:164px;width:28px;height:1px;background:#000;"></div>
<div class="r" style="left:1883px;top:194px;width:28px;height:1px;background:#000;"></div>
<div class="r" style="left:1883px;top:224px;width:28px;height:1px;background:#000;"></div>
<svg class="r" style="left:1886px;top:108px;" width="24" height="24" viewBox="0 0 24 24"><path d="M8.4,3.1 L14.8,6.8 V14.2 L8.4,17.9 L2,14.2 V6.8 Z M2,6.8 L8.4,10.5 L14.8,6.8 M8.4,10.5 V17.9" fill="none" stroke="#fff" stroke-width="1"/><rect x="17" y="6.1" width="2.8" height="2.1" fill="#fff"/><rect x="17" y="9.9" width="2.8" height="2.1" fill="#fff"/><rect x="17" y="13.8" width="2.8" height="2.1" fill="#fff"/></svg>
<svg class="r" style="left:1886px;top:138px;" width="24" height="24" viewBox="0 0 24 24"><path d="M8,3.6 H19 M8,8.4 H19 M8,17.7 H19" stroke="#fff" stroke-width="1.2"/><path d="M8,13.2 H19" stroke="#bbb" stroke-width="1.2"/><rect x="3.2" y="2.3" width="2.8" height="2.6" fill="#fff"/><rect x="3.6" y="7.4" width="2" height="1.8" fill="none" stroke="#ccc" stroke-width="0.7" stroke-dasharray="0.8,0.5"/><rect x="3.6" y="12.2" width="2" height="1.8" fill="none" stroke="#ccc" stroke-width="0.7"/><rect x="3.6" y="16.8" width="2" height="1.8" fill="none" stroke="#ccc" stroke-width="0.7"/></svg>
<svg class="r" style="left:1886px;top:167px;" width="24" height="24" viewBox="0 0 24 24"><path d="M11,3.4 L19.4,8.4 L11,13.4 L2.6,8.4 Z" fill="#fff" stroke="#fff" stroke-width="1" stroke-linejoin="round"/><path d="M2.8,11.8 L11,16.6 L19.2,11.8 M2.8,14.8 L11,19.6 L19.2,14.8" fill="none" stroke="#fff" stroke-width="1.2"/></svg>
<svg class="r" style="left:1886px;top:197px;" width="24" height="24" viewBox="0 0 24 24"><rect x="2.4" y="3" width="13" height="13.4" fill="none" stroke="#fff" stroke-width="1.1"/><rect x="5.6" y="6" width="13" height="13.4" fill="#333" stroke="#fff" stroke-width="1.1"/><path d="M8.6,6 H14 V12 L11.3,9.8 L8.6,12 Z" fill="#fff"/></svg>
<span class="t" style="left:7.00px;top:1031.05px;font:400 14.5px/1 'Liberation Sans',sans-serif;color:#fff;">Logs</span>
<div class="r" style="left:7px;top:1051px;width:30px;height:6px;background:#3f3f46;"></div>
<div class="r" style="left:0px;top:1057px;width:1920px;height:23px;background:#333333;"></div>
<span class="t" style="left:283.80px;top:1061.75px;font:400 10.5px/1 'Liberation Sans',sans-serif;color:#fff;letter-spacing:-0.201px;-webkit-text-stroke:0.35px #fff;">(1164,637)</span>
<span class="t" style="left:690.00px;top:1060.80px;font:400 13px/1 'Liberation Sans',sans-serif;color:#fff;letter-spacing:0.494px;-webkit-text-stroke:0.35px #fff;">80%</span>
<div class="r" style="left:746px;top:1066.3px;width:228px;height:3px;background:#f4f4f4;border-radius:1.5px;"></div>
<div class="r" style="left:778.5px;top:1060.5px;width:15px;height:15px;border-radius:50%;background:#c9c9c9;border:1px solid #eee"></div>
<svg class="r" style="left:991px;top:1060px;" width="15" height="16" viewBox="0 0 15 16"><path d="M1.2,5 V1.4 H4.8 M9.6,1.4 H13.2 V5 M13.2,10.6 V14.2 H9.6 M4.8,14.2 H1.2 V10.6" fill="none" stroke="#fff" stroke-width="1.6"/><path d="M2,2.2 L5,5.2 M12.4,2.2 L9.4,5.2 M12.4,13.4 L9.4,10.4 M2,13.4 L5,10.4" stroke="#fff" stroke-width="1"/></svg>
<div class="r" style="left:332px;top:81px;width:1086px;height:1px;background:#3f3f46;"></div>
<div class="r" style="left:332px;top:82px;width:1086px;height:31px;background:#333333;"></div>
<div class="r" style="left:332px;top:82px;width:149px;height:31px;border-left:1px solid #3f3f46;border-top:1px solid #3a3a40"></div>
<span class="t" style="left:342.00px;top:89.00px;font:400 14px/1 'Liberation Sans',sans-serif;color:#fff;letter-spacing:-0.641px;-webkit-text-stroke:0.3px #fff;">LIST</span>
<div class="r" style="left:480px;top:82px;width:1px;height:31px;background:#000;"></div>
<div class="r" style="left:481px;top:82px;width:151px;height:31px;background:#696969;"></div>
<svg class="r" style="left:484px;top:89px;" width="8" height="7" viewBox="0 0 8 7"><path d="M1.2,0.8 L6.4,6 M6.4,0.8 L1.2,6" stroke="#fff" stroke-width="1.3"/></svg>
<span class="t" style="left:511.00px;top:89.55px;font:400 13.5px/1 'Liberation Sans',sans-serif;color:#fff;-webkit-text-stroke:0.2px #fff;">02 </span>
<svg class="r" style="left:530.77px;top:88.06px;overflow:visible" width="40.80" height="14.96" viewBox="0 -900 3000 1100" fill="#fff"><path transform="translate(0,0) scale(1,-1)" d="M361 789C416 749 482 693 523 649H99V556H448V356H148V265H448V41H54V-51H950V41H552V265H855V356H552V556H899V649H578L628 685C587 733 503 799 439 843Z"/><path transform="translate(1000,0) scale(1,-1)" d="M79 781V693H923V781ZM259 594V142H739V594ZM337 332H455V220H337ZM538 332H657V220H538ZM337 516H455V406H337ZM538 516H657V406H538ZM83 528V-35H823V-81H918V534H823V54H180V528Z"/><path transform="translate(2000,0) scale(1,-1)" d="M401 326H587V229H401ZM401 401V494H587V401ZM401 154H587V55H401ZM55 782V692H432C426 656 418 617 409 582H98V-84H190V-32H805V-84H901V582H507L542 692H949V782ZM190 55V494H315V55ZM805 55H673V494H805Z"/></svg>
<div class="r" style="left:632px;top:82px;width:30px;height:30.5px;background:#00b9b3;"></div>
<svg class="r" style="left:642px;top:92px;" width="11" height="11" viewBox="0 0 11 11"><path d="M5.4,1 V9.6 M1.1,5.3 H9.7" stroke="#fff" stroke-width="2"/></svg>
<div class="r" style="left:332px;top:113px;width:1086px;height:909.5px;background:#696969;"></div>
<svg class="r" style="left:332px;top:113px;" width="1086" height="20" viewBox="0 0 1086 20"><g stroke="#f0f0f0" stroke-width="1.25" fill="none"><path d="M39.5,13.5 V19.5"/><path d="M47.5,16.5 V19.5"/><path d="M55.5,16.5 V19.5"/><path d="M63.5,16.5 V19.5"/><path d="M71.5,16.5 V19.5"/><path d="M79.5,13.5 V19.5"/><path d="M87.5,16.5 V19.5"/><path d="M95.5,16.5 V19.5"/><path d="M103.5,16.5 V19.5"/><path d="M111.5,16.5 V19.5"/><path d="M119.5,13.5 V19.5"/><path d="M127.5,16.5 V19.5"/><path d="M135.5,16.5 V19.5"/><path d="M143.5,16.5 V19.5"/><path d="M151.5,16.5 V19.5"/><path d="M159.5,13.5 V19.5"/><path d="M167.5,16.5 V19.5"/><path d="M175.5,16.5 V19.5"/><path d="M183.5,16.5 V19.5"/><path d="M191.5,16.5 V19.5"/><path d="M199.5,13.5 V19.5"/><path d="M207.5,16.5 V19.5"/><path d="M215.5,16.5 V19.5"/><path d="M223.5,16.5 V19.5"/><path d="M231.5,16.5 V19.5"/><path d="M239.5,13.5 V19.5"/><path d="M247.5,16.5 V19.5"/><path d="M255.5,16.5 V19.5"/><path d="M263.5,16.5 V19.5"/><path d="M271.5,16.5 V19.5"/><path d="M279.5,13.5 V19.5"/><path d="M287.5,16.5 V19.5"/><path d="M295.5,16.5 V19.5"/><path d="M303.5,16.5 V19.5"/><path d="M311.5,16.5 V19.5"/><path d="M319.5,13.5 V19.5"/><path d="M327.5,16.5 V19.5"/><path d="M335.5,16.5 V19.5"/><path d="M343.5,16.5 V19.5"/><path d="M351.5,16.5 V19.5"/><path d="M359.5,13.5 V19.5"/><path d="M367.5,16.5 V19.5"/><path d="M375.5,16.5 V19.5"/><path d="M383.5,16.5 V19.5"/><path d="M391.5,16.5 V19.5"/><path d="M399.5,13.5 V19.5"/><path d="M407.5,16.5 V19.5"/><path d="M415.5,16.5 V19.5"/><path d="M423.5,16.5 V19.5"/><path d="M431.5,16.5 V19.5"/><path d="M439.5,13.5 V19.5"/><path d="M447.5,16.5 V19.5"/><path d="M455.5,16.5 V19.5"/><path d="M463.5,16.5 V19.5"/><path d="M471.5,16.5 V19.5"/><path d="M479.5,13.5 V19.5"/><path d="M487.5,16.5 V19.5"/><path d="M495.5,16.5 V19.5"/><path d="M503.5,16.5 V19.5"/><path d="M511.5,16.5 V19.5"/><path d="M519.5,13.5 V19.5"/><path d="M527.5,16.5 V19.5"/><path d="M535.5,16.5 V19.5"/><path d="M543.5,16.5 V19.5"/><path d="M551.5,16.5 V19.5"/><path d="M559.5,13.5 V19.5"/><path d="M567.5,16.5 V19.5"/><path d="M575.5,16.5 V19.5"/><path d="M583.5,16.5 V19.5"/><path d="M591.5,16.5 V19.5"/><path d="M599.5,13.5 V19.5"/><path d="M607.5,16.5 V19.5"/><path d="M615.5,16.5 V19.5"/><path d="M623.5,16.5 V19.5"/><path d="M631.5,16.5 V19.5"/><path d="M639.5,13.5 V19.5"/><path d="M647.5,16.5 V19.5"/><path d="M655.5,16.5 V19.5"/><path d="M663.5,16.5 V19.5"/><path d="M671.5,16.5 V19.5"/><path d="M679.5,13.5 V19.5"/><path d="M687.5,16.5 V19.5"/><path d="M695.5,16.5 V19.5"/><path d="M703.5,16.5 V19.5"/><path d="M711.5,16.5 V19.5"/><path d="M719.5,13.5 V19.5"/><path d="M727.5,16.5 V19.5"/><path d="M735.5,16.5 V19.5"/><path d="M743.5,16.5 V19.5"/><path d="M751.5,16.5 V19.5"/><path d="M759.5,13.5 V19.5"/><path d="M767.5,16.5 V19.5"/><path d="M775.5,16.5 V19.5"/><path d="M783.5,16.5 V19.5"/><path d="M791.5,16.5 V19.5"/><path d="M799.5,13.5 V19.5"/><path d="M807.5,16.5 V19.5"/><path d="M815.5,16.5 V19.5"/><path d="M823.5,16.5 V19.5"/><path d="M831.5,16.5 V19.5"/><path d="M839.5,13.5 V19.5"/><path d="M847.5,16.5 V19.5"/><path d="M855.5,16.5 V19.5"/><path d="M863.5,16.5 V19.5"/><path d="M871.5,16.5 V19.5"/><path d="M879.5,13.5 V19.5"/><path d="M887.5,16.5 V19.5"/><path d="M895.5,16.5 V19.5"/><path d="M903.5,16.5 V19.5"/><path d="M911.5,16.5 V19.5"/><path d="M919.5,13.5 V19.5"/><path d="M927.5,16.5 V19.5"/><path d="M935.5,16.5 V19.5"/><path d="M943.5,16.5 V19.5"/><path d="M951.5,16.5 V19.5"/><path d="M959.5,13.5 V19.5"/><path d="M967.5,16.5 V19.5"/><path d="M975.5,16.5 V19.5"/><path d="M983.5,16.5 V19.5"/><path d="M991.5,16.5 V19.5"/><path d="M999.5,13.5 V19.5"/><path d="M1007.5,16.5 V19.5"/><path d="M1015.5,16.5 V19.5"/><path d="M1023.5,16.5 V19.5"/><path d="M1031.5,16.5 V19.5"/><path d="M1039.5,13.5 V19.5"/><path d="M1047.5,16.5 V19.5"/><path d="M1055.5,16.5 V19.5"/><path d="M1063.5,16.5 V19.5"/></g></svg>
<svg class="r" style="left:332px;top:113px;" width="20" height="909" viewBox="0 0 20 909"><g stroke="#f0f0f0" stroke-width="1.25" fill="none"><path d="M13.5,132.5 H19.5"/><path d="M16.5,140.5 H19.5"/><path d="M16.5,148.5 H19.5"/><path d="M16.5,156.5 H19.5"/><path d="M16.5,164.5 H19.5"/><path d="M13.5,172.5 H19.5"/><path d="M16.5,180.5 H19.5"/><path d="M16.5,188.5 H19.5"/><path d="M16.5,196.5 H19.5"/><path d="M16.5,204.5 H19.5"/><path d="M13.5,212.5 H19.5"/><path d="M16.5,220.5 H19.5"/><path d="M16.5,228.5 H19.5"/><path d="M16.5,236.5 H19.5"/><path d="M16.5,244.5 H19.5"/><path d="M13.5,252.5 H19.5"/><path d="M16.5,260.5 H19.5"/><path d="M16.5,268.5 H19.5"/><path d="M16.5,276.5 H19.5"/><path d="M16.5,284.5 H19.5"/><path d="M13.5,292.5 H19.5"/><path d="M16.5,300.5 H19.5"/><path d="M16.5,308.5 H19.5"/><path d="M16.5,316.5 H19.5"/><path d="M16.5,324.5 H19.5"/><path d="M13.5,332.5 H19.5"/><path d="M16.5,340.5 H19.5"/><path d="M16.5,348.5 H19.5"/><path d="M16.5,356.5 H19.5"/><path d="M16.5,364.5 H19.5"/><path d="M13.5,372.5 H19.5"/><path d="M16.5,380.5 H19.5"/><path d="M16.5,388.5 H19.5"/><path d="M16.5,396.5 H19.5"/><path d="M16.5,404.5 H19.5"/><path d="M13.5,412.5 H19.5"/><path d="M16.5,420.5 H19.5"/><path d="M16.5,428.5 H19.5"/><path d="M16.5,436.5 H19.5"/><path d="M16.5,444.5 H19.5"/><path d="M13.5,452.5 H19.5"/><path d="M16.5,460.5 H19.5"/><path d="M16.5,468.5 H19.5"/><path d="M16.5,476.5 H19.5"/><path d="M16.5,484.5 H19.5"/><path d="M13.5,492.5 H19.5"/><path d="M16.5,500.5 H19.5"/><path d="M16.5,508.5 H19.5"/><path d="M16.5,516.5 H19.5"/><path d="M16.5,524.5 H19.5"/><path d="M13.5,532.5 H19.5"/><path d="M16.5,540.5 H19.5"/><path d="M16.5,548.5 H19.5"/><path d="M16.5,556.5 H19.5"/><path d="M16.5,564.5 H19.5"/><path d="M13.5,572.5 H19.5"/><path d="M16.5,580.5 H19.5"/><path d="M16.5,588.5 H19.5"/><path d="M16.5,596.5 H19.5"/><path d="M16.5,604.5 H19.5"/><path d="M13.5,612.5 H19.5"/><path d="M16.5,620.5 H19.5"/><path d="M16.5,628.5 H19.5"/><path d="M16.5,636.5 H19.5"/><path d="M16.5,644.5 H19.5"/><path d="M13.5,652.5 H19.5"/><path d="M16.5,660.5 H19.5"/><path d="M16.5,668.5 H19.5"/><path d="M16.5,676.5 H19.5"/><path d="M16.5,684.5 H19.5"/><path d="M13.5,692.5 H19.5"/><path d="M16.5,700.5 H19.5"/><path d="M16.5,708.5 H19.5"/><path d="M16.5,716.5 H19.5"/><path d="M16.5,724.5 H19.5"/><path d="M13.5,732.5 H19.5"/><path d="M16.5,740.5 H19.5"/><path d="M16.5,748.5 H19.5"/><path d="M16.5,756.5 H19.5"/><path d="M16.5,764.5 H19.5"/><path d="M13.5,772.5 H19.5"/></g></svg>
<div class="r" style="left:332px;top:132px;width:1086px;height:1px;background:#ececec;"></div>
<div class="r" style="left:351px;top:113px;width:1px;height:909px;background:#ececec;"></div>
<span class="t" style="left:407.61px;top:117.90px;font:400 7px/1 'Liberation Sans',sans-serif;color:#fff;-webkit-text-stroke:0.25px #fff;">50</span>
<span class="t" style="left:443.74px;top:116.25px;font:400 9.3px/1 'Liberation Sans',sans-serif;color:#fff;-webkit-text-stroke:0.35px #fff;">100</span>
<span class="t" style="left:485.66px;top:117.90px;font:400 7px/1 'Liberation Sans',sans-serif;color:#fff;-webkit-text-stroke:0.25px #fff;">150</span>
<span class="t" style="left:523.74px;top:116.25px;font:400 9.3px/1 'Liberation Sans',sans-serif;color:#fff;-webkit-text-stroke:0.35px #fff;">200</span>
<span class="t" style="left:565.66px;top:117.90px;font:400 7px/1 'Liberation Sans',sans-serif;color:#fff;-webkit-text-stroke:0.25px #fff;">250</span>
<span class="t" style="left:603.74px;top:116.25px;font:400 9.3px/1 'Liberation Sans',sans-serif;color:#fff;-webkit-text-stroke:0.35px #fff;">300</span>
<span class="t" style="left:645.66px;top:117.90px;font:400 7px/1 'Liberation Sans',sans-serif;color:#fff;-webkit-text-stroke:0.25px #fff;">350</span>
<span class="t" style="left:683.74px;top:116.25px;font:400 9.3px/1 'Liberation Sans',sans-serif;color:#fff;-webkit-text-stroke:0.35px #fff;">400</span>
<span class="t" style="left:725.66px;top:117.90px;font:400 7px/1 'Liberation Sans',sans-serif;color:#fff;-webkit-text-stroke:0.25px #fff;">450</span>
<span class="t" style="left:763.74px;top:116.25px;font:400 9.3px/1 'Liberation Sans',sans-serif;color:#fff;-webkit-text-stroke:0.35px #fff;">500</span>
<span class="t" style="left:805.66px;top:117.90px;font:400 7px/1 'Liberation Sans',sans-serif;color:#fff;-webkit-text-stroke:0.25px #fff;">550</span>
<span class="t" style="left:843.74px;top:116.25px;font:400 9.3px/1 'Liberation Sans',sans-serif;color:#fff;-webkit-text-stroke:0.35px #fff;">600</span>
<span class="t" style="left:885.66px;top:117.90px;font:400 7px/1 'Liberation Sans',sans-serif;color:#fff;-webkit-text-stroke:0.25px #fff;">650</span>
<span class="t" style="left:923.74px;top:116.25px;font:400 9.3px/1 'Liberation Sans',sans-serif;color:#fff;-webkit-text-stroke:0.35px #fff;">700</span>
<span class="t" style="left:965.66px;top:117.90px;font:400 7px/1 'Liberation Sans',sans-serif;color:#fff;-webkit-text-stroke:0.25px #fff;">750</span>
<span class="t" style="left:1003.74px;top:116.25px;font:400 9.3px/1 'Liberation Sans',sans-serif;color:#fff;-webkit-text-stroke:0.35px #fff;">800</span>
<span class="t" style="left:1045.66px;top:117.90px;font:400 7px/1 'Liberation Sans',sans-serif;color:#fff;-webkit-text-stroke:0.25px #fff;">850</span>
<span class="t" style="left:1083.74px;top:116.25px;font:400 9.3px/1 'Liberation Sans',sans-serif;color:#fff;-webkit-text-stroke:0.35px #fff;">900</span>
<span class="t" style="left:1125.66px;top:117.90px;font:400 7px/1 'Liberation Sans',sans-serif;color:#fff;-webkit-text-stroke:0.25px #fff;">950</span>
<span class="t" style="left:1161.16px;top:116.25px;font:400 9.3px/1 'Liberation Sans',sans-serif;color:#fff;-webkit-text-stroke:0.35px #fff;">1000</span>
<span class="t" style="left:1203.71px;top:117.90px;font:400 7px/1 'Liberation Sans',sans-serif;color:#fff;-webkit-text-stroke:0.25px #fff;">1050</span>
<span class="t" style="left:1241.50px;top:116.25px;font:400 9.3px/1 'Liberation Sans',sans-serif;color:#fff;-webkit-text-stroke:0.35px #fff;">1100</span>
<span class="t" style="left:1283.97px;top:117.90px;font:400 7px/1 'Liberation Sans',sans-serif;color:#fff;-webkit-text-stroke:0.25px #fff;">1150</span>
<span class="t" style="left:1321.16px;top:116.25px;font:400 9.3px/1 'Liberation Sans',sans-serif;color:#fff;-webkit-text-stroke:0.35px #fff;">1200</span>
<span class="t" style="left:1363.71px;top:117.90px;font:400 7px/1 'Liberation Sans',sans-serif;color:#fff;-webkit-text-stroke:0.25px #fff;">1250</span>
<span class="t" style="left:338.6px;top:281.61px;font:400 7px/1 'Liberation Sans',sans-serif;color:#fff;-webkit-text-stroke:0.25px #fff;transform-origin:0 0;transform:rotate(90deg) translate(0,-5.93px)">50</span>
<span class="t" style="left:337.0px;top:317.74px;font:400 9.3px/1 'Liberation Sans',sans-serif;color:#fff;-webkit-text-stroke:0.35px #fff;transform-origin:0 0;transform:rotate(90deg) translate(0,-7.87px)">100</span>
<span class="t" style="left:338.6px;top:359.66px;font:400 7px/1 'Liberation Sans',sans-serif;color:#fff;-webkit-text-stroke:0.25px #fff;transform-origin:0 0;transform:rotate(90deg) translate(0,-5.93px)">150</span>
<span class="t" style="left:337.0px;top:397.74px;font:400 9.3px/1 'Liberation Sans',sans-serif;color:#fff;-webkit-text-stroke:0.35px #fff;transform-origin:0 0;transform:rotate(90deg) translate(0,-7.87px)">200</span>
<span class="t" style="left:338.6px;top:439.66px;font:400 7px/1 'Liberation Sans',sans-serif;color:#fff;-webkit-text-stroke:0.25px #fff;transform-origin:0 0;transform:rotate(90deg) translate(0,-5.93px)">250</span>
<span class="t" style="left:337.0px;top:477.74px;font:400 9.3px/1 'Liberation Sans',sans-serif;color:#fff;-webkit-text-stroke:0.35px #fff;transform-origin:0 0;transform:rotate(90deg) translate(0,-7.87px)">300</span>
<span class="t" style="left:338.6px;top:519.66px;font:400 7px/1 'Liberation Sans',sans-serif;color:#fff;-webkit-text-stroke:0.25px #fff;transform-origin:0 0;transform:rotate(90deg) translate(0,-5.93px)">350</span>
<span class="t" style="left:337.0px;top:557.74px;font:400 9.3px/1 'Liberation Sans',sans-serif;color:#fff;-webkit-text-stroke:0.35px #fff;transform-origin:0 0;transform:rotate(90deg) translate(0,-7.87px)">400</span>
<span class="t" style="left:338.6px;top:599.66px;font:400 7px/1 'Liberation Sans',sans-serif;color:#fff;-webkit-text-stroke:0.25px #fff;transform-origin:0 0;transform:rotate(90deg) translate(0,-5.93px)">450</span>
<span class="t" style="left:337.0px;top:637.74px;font:400 9.3px/1 'Liberation Sans',sans-serif;color:#fff;-webkit-text-stroke:0.35px #fff;transform-origin:0 0;transform:rotate(90deg) translate(0,-7.87px)">500</span>
<span class="t" style="left:338.6px;top:679.66px;font:400 7px/1 'Liberation Sans',sans-serif;color:#fff;-webkit-text-stroke:0.25px #fff;transform-origin:0 0;transform:rotate(90deg) translate(0,-5.93px)">550</span>
<span class="t" style="left:337.0px;top:717.74px;font:400 9.3px/1 'Liberation Sans',sans-serif;color:#fff;-webkit-text-stroke:0.35px #fff;transform-origin:0 0;transform:rotate(90deg) translate(0,-7.87px)">600</span>
<span class="t" style="left:338.6px;top:759.66px;font:400 7px/1 'Liberation Sans',sans-serif;color:#fff;-webkit-text-stroke:0.25px #fff;transform-origin:0 0;transform:rotate(90deg) translate(0,-5.93px)">650</span>
<span class="t" style="left:337.0px;top:797.74px;font:400 9.3px/1 'Liberation Sans',sans-serif;color:#fff;-webkit-text-stroke:0.35px #fff;transform-origin:0 0;transform:rotate(90deg) translate(0,-7.87px)">700</span>
<span class="t" style="left:338.6px;top:839.66px;font:400 7px/1 'Liberation Sans',sans-serif;color:#fff;-webkit-text-stroke:0.25px #fff;transform-origin:0 0;transform:rotate(90deg) translate(0,-5.93px)">750</span>
<div class="r" style="left:1302px;top:113px;width:2px;height:19px;background:#00b9b3;"></div>
<div class="r" style="left:332px;top:753.8px;width:20px;height:2px;background:#00b9b3;"></div>
<svg class="r" style="left:372px;top:245px" width="1024" height="640.5"><defs><pattern id="dots" x="8" y="8" width="8" height="8" patternUnits="userSpaceOnUse"><rect x="0" y="0" width="1" height="1" fill="#7c7c7c"/></pattern></defs><rect width="100%" height="100%" fill="#b9b9b9"/><rect width="100%" height="100%" fill="url(#dots)"/><path d="M0.5,640.5 V0.5 H1024" fill="none" stroke="#5c5c5c" stroke-width="1"/></svg>
<span class="t" style="left:823.00px;top:257.45px;font:400 20.3px/1 'Liberation Sans',sans-serif;color:#000;transform-origin:0 0;transform:scaleX(0.9389);">Main Screen</span>
<span class="t" style="left:1215.40px;top:258.80px;font:400 16.6px/1 'Liberation Sans',sans-serif;color:#000;transform-origin:0 0;transform:scaleX(0.9738);">14:42:24  09-06-2022</span>
<div class="r" style="left:372px;top:286px;width:1024.6px;height:52px;background:#828282;border:1px solid #262626;"></div>
<span class="t" style="left:443.80px;top:297.35px;font:400 12.5px/1 'Liberation Sans',sans-serif;color:#000;transform-origin:0 0;transform:scaleX(0.9255);">Current Recipe</span>
<span class="t" style="left:608.40px;top:297.35px;font:400 12.5px/1 'Liberation Sans',sans-serif;color:#000;transform-origin:0 0;transform:scaleX(0.9341);">Open Degree</span>
<span class="t" style="left:818.30px;top:297.35px;font:400 12.5px/1 'Liberation Sans',sans-serif;color:#000;transform-origin:0 0;transform:scaleX(0.9513);">Current Mode</span>
<span class="t" style="left:936.50px;top:297.35px;font:400 12.5px/1 'Liberation Sans',sans-serif;color:#000;transform-origin:0 0;transform:scaleX(0.9418);">Current Status</span>
<span class="t" style="left:1084.00px;top:297.35px;font:400 12.5px/1 'Liberation Sans',sans-serif;color:#000;transform-origin:0 0;transform:scaleX(0.9550);">The current location</span>
<span class="t" style="left:465.70px;top:320.35px;font:400 12.5px/1 'Liberation Sans',sans-serif;color:#ffff00;transform-origin:0 0;transform:scaleX(0.9350);">$$$$$$</span>
<span class="t" style="left:619.60px;top:320.35px;font:400 12.5px/1 'Liberation Sans',sans-serif;color:#ffff00;letter-spacing:1.490px;-webkit-text-stroke:0.3px #ffff00;transform-origin:0 0;transform:scaleX(1.04);">#####</span>
<span class="t" style="left:669.70px;top:318.10px;font:400 17px/1 'Liberation Sans',sans-serif;color:#ffff00;transform-origin:0 0;transform:scaleX(1.0122);">%</span>
<span class="t" style="left:843.00px;top:319.75px;font:400 12.5px/1 'Liberation Sans',sans-serif;color:#7fff00;transform-origin:0 0;transform:scaleX(1.0033);">Text</span>
<span class="t" style="left:963.00px;top:319.75px;font:400 12.5px/1 'Liberation Sans',sans-serif;color:#7fff00;transform-origin:0 0;transform:scaleX(1.0033);">Text</span>
<span class="t" style="left:1120.70px;top:320.35px;font:400 12.5px/1 'Liberation Sans',sans-serif;color:#ffff00;letter-spacing:1.365px;-webkit-text-stroke:0.3px #ffff00;transform-origin:0 0;transform:scaleX(1.04);">##</span>
<div class="r" style="left:1220px;top:294px;width:168.5px;height:40px;background:#b4b4b4;"></div>
<span class="t" style="left:1225.00px;top:308.85px;font:400 12.5px/1 'Liberation Sans',sans-serif;color:#ff0000;transform-origin:0 0;transform:scaleX(0.9436);">Machine is no synchronization</span>
<style>
.mb{background:linear-gradient(90deg,rgba(50,46,44,.22) 0,rgba(50,46,44,0) 3%,rgba(50,46,44,0) 97%,rgba(50,46,44,.22) 100%),linear-gradient(180deg,#3a3634 0,#4b4745 4%,#75726f 11%,#9d9b9a 19%,#bcbbbb 30%,#e2e2e2 46%,#ececec 52%,#d2d2d2 62%,#a9a8a7 73%,#7f7c7b 82%,#524e4c 90%,#342f2d 96%,#2c2826 100%)}
.pill{background:linear-gradient(180deg,#e6e6e6 0,#cdcdcd 5%,#d6d6d6 22%,#ececec 42%,#f5f5f5 52%,#e6e6e6 70%,#d6d6d6 90%,#c6c6c6 100%);box-shadow:0 1.5px 2px rgba(0,0,0,.45),0 0 1px rgba(0,0,0,.35)}
.pill.pr{background:linear-gradient(180deg,#b4b4b4 0,#c6c6c6 40%,#d0d0d0 60%,#bdbdbd 100%);box-shadow:inset 0 1px 2px rgba(0,0,0,.45),0 0 1px rgba(0,0,0,.4)}
</style>
<div class="r mb" style="left:1044.5px;top:343.2px;width:103.6px;height:55.6px"></div>
<div class="r pill" style="left:1048.5px;top:354px;width:95.6px;height:31.5px;border-radius:15.75px"></div>
<span class="t" style="left:1049.10px;top:365.35px;font:400 12.5px/1 'Liberation Sans',sans-serif;color:#111;transform-origin:0 0;transform:scaleX(0.9594);">The filling pipeline</span>
<div class="r mb" style="left:1164.4px;top:343.2px;width:103.6px;height:55.6px"></div>
<div class="r pill" style="left:1168.4px;top:354px;width:95.6px;height:31.5px;border-radius:15.75px"></div>
<span class="t" style="left:1196.50px;top:366.25px;font:400 12.5px/1 'Liberation Sans',sans-serif;color:#111;transform-origin:0 0;transform:scaleX(0.9244);">Manual</span>
<div class="r mb" style="left:1284.3px;top:343.2px;width:103.6px;height:55.6px"></div>
<div class="r pill" style="left:1288.3px;top:354px;width:95.6px;height:31.5px;border-radius:15.75px"></div>
<span class="t" style="left:1318.00px;top:366.25px;font:400 12.5px/1 'Liberation Sans',sans-serif;color:#111;transform-origin:0 0;transform:scaleX(0.9195);">Report</span>
<div class="r mb" style="left:1164.4px;top:404.3px;width:103.6px;height:55.6px"></div>
<div class="r pill" style="left:1168.4px;top:415px;width:95.6px;height:31.5px;border-radius:15.75px"></div>
<span class="t" style="left:1197.90px;top:427.05px;font:400 12.5px/1 'Liberation Sans',sans-serif;color:#111;transform-origin:0 0;transform:scaleX(0.9188);">Config</span>
<div class="r mb" style="left:1284.3px;top:404.3px;width:103.6px;height:55.6px"></div>
<div class="r pill" style="left:1288.3px;top:415px;width:95.6px;height:31.5px;border-radius:15.75px"></div>
<span class="t" style="left:1324.70px;top:427.05px;font:400 12.5px/1 'Liberation Sans',sans-serif;color:#111;transform-origin:0 0;transform:scaleX(0.8830);">CIP</span>
<div class="r mb" style="left:1164.4px;top:465.8px;width:103.6px;height:55.6px"></div>
<div class="r pill" style="left:1168.4px;top:477px;width:95.6px;height:31.5px;border-radius:15.75px"></div>
<span class="t" style="left:1180.10px;top:488.95px;font:400 12.5px/1 'Liberation Sans',sans-serif;color:#111;transform-origin:0 0;transform:scaleX(0.9603);">Valve control</span>
<div class="r mb" style="left:1284.3px;top:465.8px;width:103.6px;height:55.6px"></div>
<div class="r pill" style="left:1288.3px;top:477px;width:95.6px;height:31.5px;border-radius:15.75px"></div>
<span class="t" style="left:1308.10px;top:488.95px;font:400 12.5px/1 'Liberation Sans',sans-serif;color:#111;transform-origin:0 0;transform:scaleX(0.9419);">Lubrication</span>
<div class="r mb" style="left:373px;top:827.5px;width:135.2px;height:55.5px"></div>
<div class="r pill" style="left:377.7px;top:838px;width:125.79999999999998px;height:32px;border-radius:16.0px"></div>
<span class="t" style="left:415.60px;top:847.90px;font:400 17.4px/1 'Liberation Sans',sans-serif;color:#111;transform-origin:0 0;transform:scaleX(0.8730);">Mode</span>
<div class="r mb" style="left:521px;top:827.5px;width:135.2px;height:55.5px"></div>
<div class="r pill" style="left:525.7px;top:838px;width:125.79999999999998px;height:32px;border-radius:16.0px"></div>
<span class="t" style="left:561.90px;top:847.90px;font:400 17.4px/1 'Liberation Sans',sans-serif;color:#111;transform-origin:0 0;transform:scaleX(0.8898);">Home</span>
<div class="r mb" style="left:669px;top:827.5px;width:135.2px;height:55.5px"></div>
<div class="r pill pr" style="left:673.7px;top:838px;width:125.79999999999998px;height:32px;border-radius:16.0px"></div>
<span class="t" style="left:691.80px;top:847.90px;font:400 17.4px/1 'Liberation Sans',sans-serif;color:#111;transform-origin:0 0;transform:scaleX(0.8722);">Main Screen</span>
<div class="r mb" style="left:817px;top:827.5px;width:135.2px;height:55.5px"></div>
<div class="r pill" style="left:821.7px;top:838px;width:125.79999999999998px;height:32px;border-radius:16.0px"></div>
<span class="t" style="left:870.30px;top:847.90px;font:400 17.4px/1 'Liberation Sans',sans-serif;color:#111;transform-origin:0 0;transform:scaleX(0.8629);">User</span>
<div class="r mb" style="left:965px;top:827.5px;width:135.2px;height:55.5px"></div>
<div class="r pill" style="left:969.7px;top:838px;width:125.79999999999998px;height:32px;border-radius:16.0px"></div>
<span class="t" style="left:980.70px;top:847.90px;font:400 17.4px/1 'Liberation Sans',sans-serif;color:#111;transform-origin:0 0;transform:scaleX(0.8844);">PackML  State</span>
<div class="r mb" style="left:1113px;top:827.5px;width:135.2px;height:55.5px"></div>
<div class="r pill" style="left:1117.7px;top:838px;width:125.79999999999998px;height:32px;border-radius:16.0px"></div>
<span class="t" style="left:1162.00px;top:847.90px;font:400 17.4px/1 'Liberation Sans',sans-serif;color:#111;transform-origin:0 0;transform:scaleX(0.8935);">Alarm</span>
<div class="r mb" style="left:1261px;top:827.5px;width:135.2px;height:55.5px"></div>
<div class="r pill" style="left:1265.7px;top:838px;width:125.79999999999998px;height:32px;border-radius:16.0px"></div>
<span class="t" style="left:1303.20px;top:847.90px;font:400 17.4px/1 'Liberation Sans',sans-serif;color:#111;transform-origin:0 0;transform:scaleX(0.8567);">Recipe</span>
<svg class="r" style="left:508px;top:404px" width="498" height="411"><rect x="0.5" y="0.5" width="496" height="409.1" fill="#b9b9b9"/></svg>
<div class="r" style="left:372px;top:406px;width:136.5px;height:143.5px;background:#c4c4c4;border:1px solid #6c6c6c"></div>
<div class="r" style="left:372px;top:548.5px;width:136.5px;height:129px;background:#c4c4c4;border:1px solid #6c6c6c"></div>
<div class="r" style="left:372px;top:686px;width:136.5px;height:80px;background:#ffcc99;border:1px solid #6c6c6c"></div>
<div class="r" style="left:384.4px;top:438px;width:88.4px;height:32px;background:#000;"></div>
<div class="r" style="left:384.4px;top:505.6px;width:88.4px;height:32.2px;background:#000;"></div>
<div class="r" style="left:384.5px;top:585.8px;width:96px;height:31.8px;background:#000;"></div>
<div class="r" style="left:384.5px;top:718px;width:88px;height:31.6px;background:#000;"></div>
<span class="t" style="left:408.00px;top:417.35px;font:400 12.5px/1 'Liberation Sans',sans-serif;color:#000;transform-origin:0 0;transform:scaleX(0.9260);">Auto Speed</span>
<span class="t" style="left:395.60px;top:485.95px;font:400 12.5px/1 'Liberation Sans',sans-serif;color:#000;transform-origin:0 0;transform:scaleX(0.9131);">Speed Feedback</span>
<span class="t" style="left:420.50px;top:565.35px;font:400 12.5px/1 'Liberation Sans',sans-serif;color:#000;transform-origin:0 0;transform:scaleX(0.9727);">Output</span>
<span class="t" style="left:411.30px;top:697.35px;font:400 12.5px/1 'Liberation Sans',sans-serif;color:#000;transform-origin:0 0;transform:scaleX(0.9068);">Jog Speed</span>
<span class="t" style="left:407.00px;top:449.35px;font:400 12.5px/1 'Liberation Sans',sans-serif;color:#ffff00;letter-spacing:1.606px;-webkit-text-stroke:0.3px #ffff00;transform-origin:0 0;transform:scaleX(1.04);">#####</span>
<span class="t" style="left:407.00px;top:516.95px;font:400 12.5px/1 'Liberation Sans',sans-serif;color:#ffff00;letter-spacing:1.606px;-webkit-text-stroke:0.3px #ffff00;transform-origin:0 0;transform:scaleX(1.04);">#####</span>
<span class="t" style="left:398.30px;top:597.15px;font:400 12.5px/1 'Liberation Sans',sans-serif;color:#ffff00;letter-spacing:1.486px;-webkit-text-stroke:0.3px #ffff00;transform-origin:0 0;transform:scaleX(1.04);">########</span>
<span class="t" style="left:407.50px;top:729.15px;font:400 12.5px/1 'Liberation Sans',sans-serif;color:#ffff00;letter-spacing:1.413px;-webkit-text-stroke:0.3px #ffff00;transform-origin:0 0;transform:scaleX(1.04);">#####</span>
<span class="t" style="left:475.60px;top:453.35px;font:400 12.5px/1 'Liberation Sans',sans-serif;color:#000;transform-origin:0 0;transform:scaleX(0.8132);">BPH</span>
<span class="t" style="left:475.60px;top:521.35px;font:400 12.5px/1 'Liberation Sans',sans-serif;color:#000;transform-origin:0 0;transform:scaleX(0.8132);">BPH</span>
<span class="t" style="left:483.00px;top:597.35px;font:400 12.5px/1 'Liberation Sans',sans-serif;color:#000;">B</span>
<span class="t" style="left:475.50px;top:730.85px;font:400 12.5px/1 'Liberation Sans',sans-serif;color:#000;transform-origin:0 0;transform:scaleX(0.8287);">BPH</span>
<style>
.rb{border-radius:5.5px;background:linear-gradient(180deg,#727878 0,#4a5050 18%,#262d2d 42%,#262d2d 58%,#4c5252 80%,#8d9292 100%)}
.rbi{border-radius:4.5px;background:#830000;border:1px solid;border-color:#2a0c0c #e6d6d6 #f0e4e4 #e6d6d6;box-shadow:0 0 1.5px 0.5px rgba(10,14,14,.9)}
</style>
<div class="r rb" style="left:410.8px;top:634.2px;width:35.5px;height:35.3px"></div>
<div class="r rbi" style="left:414.2px;top:637.5px;width:28.8px;height:28.8px"></div>
<span class="t" style="left:412.00px;top:644.15px;font:400 12.5px/1 'Liberation Sans',sans-serif;color:#000;-webkit-text-stroke:0.15px #000;transform-origin:0 0;transform:scaleX(0.8973);">Reset</span>
<svg class="r" style="left:0;top:0" width="1920" height="1080"><g fill="#e8e8e8" stroke="#3c3c3c" stroke-width="1"><path d="M568.5,403.5 H740 L771.7,430 V563.8 L759.7,582.5 H533.7 V437.5 Z"/><path d="M533.7,582.5 H759.7 V635.5 H884.7 V682.5 H972 V798 H533.7 Z"/><path d="M759.7,635.5 V798" fill="none"/></g><ellipse cx="655.6" cy="508.7" rx="98.4" ry="99.7" fill="#9e9c9e" stroke="#333" stroke-width="1"/><ellipse cx="586.8" cy="717.2" rx="44.7" ry="45.5" fill="#9e9c9e" stroke="#444" stroke-width="0.8"/><ellipse cx="612.5" cy="638.7" rx="34.80" ry="35.30" fill="#000"/><polygon points="607.89,614.93 607.89,606.41 618.11,606.41 618.11,614.93 626.19,618.28 632.22,612.25 639.45,619.48 633.42,625.51 636.77,633.59 645.29,633.59 645.29,643.81 636.77,643.81 633.42,651.89 639.45,657.92 632.22,665.15 626.19,659.12 618.11,662.47 618.11,670.99 607.89,670.99 607.89,662.47 599.81,659.12 593.78,665.15 586.55,657.92 592.58,651.89 589.23,643.81 580.71,643.81 580.71,633.59 589.23,633.59 592.58,625.51 586.55,619.48 593.78,612.25 599.81,618.28" fill="#00ffff"/><circle cx="612.5" cy="638.7" r="5.42" fill="none" stroke="#004a4a" stroke-width="0.9"/><ellipse cx="714.3" cy="632.5" rx="34.70" ry="35.20" fill="#000"/><polygon points="709.70,608.80 709.70,600.30 719.90,600.30 719.90,608.80 727.95,612.14 733.96,606.12 741.18,613.34 735.16,619.35 738.50,627.40 747.00,627.40 747.00,637.60 738.50,637.60 735.16,645.65 741.18,651.66 733.96,658.88 727.95,652.86 719.90,656.20 719.90,664.70 709.70,664.70 709.70,656.20 701.65,652.86 695.64,658.88 688.42,651.66 694.44,645.65 691.10,637.60 682.60,637.60 682.60,627.40 691.10,627.40 694.44,619.35 688.42,613.34 695.64,606.12 701.65,612.14" fill="#00ffff"/><circle cx="714.3" cy="632.5" r="5.40" fill="none" stroke="#004a4a" stroke-width="0.9"/><ellipse cx="667" cy="730" rx="34.60" ry="35.10" fill="#000"/><polygon points="662.41,706.37 662.41,697.89 672.59,697.89 672.59,706.37 680.61,709.69 686.61,703.70 693.80,710.89 687.81,716.89 691.13,724.91 699.61,724.91 699.61,735.09 691.13,735.09 687.81,743.11 693.80,749.11 686.61,756.30 680.61,750.31 672.59,753.63 672.59,762.11 662.41,762.11 662.41,753.63 654.39,750.31 648.39,756.30 641.20,749.11 647.19,743.11 643.87,735.09 635.39,735.09 635.39,724.91 643.87,724.91 647.19,716.89 641.20,710.89 648.39,703.70 654.39,709.69" fill="#00ffff"/><circle cx="667" cy="730" r="5.38" fill="none" stroke="#004a4a" stroke-width="0.9"/><ellipse cx="754.2" cy="692" rx="34.60" ry="35.10" fill="#000"/><polygon points="749.61,668.37 749.61,659.89 759.79,659.89 759.79,668.37 767.81,671.69 773.81,665.70 781.00,672.89 775.01,678.89 778.33,686.91 786.81,686.91 786.81,697.09 778.33,697.09 775.01,705.11 781.00,711.11 773.81,718.30 767.81,712.31 759.79,715.63 759.79,724.11 749.61,724.11 749.61,715.63 741.59,712.31 735.59,718.30 728.40,711.11 734.39,705.11 731.07,697.09 722.59,697.09 722.59,686.91 731.07,686.91 734.39,678.89 728.40,672.89 735.59,665.70 741.59,671.69" fill="#00ffff"/><circle cx="754.2" cy="692" r="5.38" fill="none" stroke="#004a4a" stroke-width="0.9"/><ellipse cx="837.6" cy="693.6" rx="34.60" ry="35.10" fill="#000"/><polygon points="833.01,669.97 833.01,661.49 843.19,661.49 843.19,669.97 851.21,673.29 857.21,667.30 864.40,674.49 858.41,680.49 861.73,688.51 870.21,688.51 870.21,698.69 861.73,698.69 858.41,706.71 864.40,712.71 857.21,719.90 851.21,713.91 843.19,717.23 843.19,725.71 833.01,725.71 833.01,717.23 824.99,713.91 818.99,719.90 811.80,712.71 817.79,706.71 814.47,698.69 805.99,698.69 805.99,688.51 814.47,688.51 817.79,680.49 811.80,674.49 818.99,667.30 824.99,673.29" fill="#00ffff"/><circle cx="837.6" cy="693.6" r="5.38" fill="none" stroke="#004a4a" stroke-width="0.9"/><ellipse cx="793.8" cy="750.1" rx="34.60" ry="35.10" fill="#000"/><polygon points="789.21,726.47 789.21,717.99 799.39,717.99 799.39,726.47 807.41,729.79 813.41,723.80 820.60,730.99 814.61,736.99 817.93,745.01 826.41,745.01 826.41,755.19 817.93,755.19 814.61,763.21 820.60,769.21 813.41,776.40 807.41,770.41 799.39,773.73 799.39,782.21 789.21,782.21 789.21,773.73 781.19,770.41 775.19,776.40 768.00,769.21 773.99,763.21 770.67,755.19 762.19,755.19 762.19,745.01 770.67,745.01 773.99,736.99 768.00,730.99 775.19,723.80 781.19,729.79" fill="#00ffff"/><circle cx="793.8" cy="750.1" r="5.38" fill="none" stroke="#004a4a" stroke-width="0.9"/><ellipse cx="860" cy="748.3" rx="22.50" ry="23.00" fill="#000"/><polygon points="857.20,732.96 857.20,727.45 863.80,727.45 863.80,732.96 869.01,735.12 872.91,731.22 877.58,735.89 873.68,739.79 875.84,745.00 881.35,745.00 881.35,751.60 875.84,751.60 873.68,756.81 877.58,760.71 872.91,765.38 869.01,761.48 863.80,763.64 863.80,769.15 857.20,769.15 857.20,763.64 851.99,761.48 848.09,765.38 843.42,760.71 847.32,756.81 845.16,751.60 839.65,751.60 839.65,745.00 845.16,745.00 847.32,739.79 843.42,735.89 848.09,731.22 851.99,735.12" fill="#00ffff"/><circle cx="860" cy="748.3" r="3.50" fill="none" stroke="#004a4a" stroke-width="0.9"/><ellipse cx="909.2" cy="747.5" rx="22.30" ry="22.80" fill="#000"/><polygon points="906.43,732.29 906.43,726.84 912.97,726.84 912.97,732.29 918.14,734.43 922.00,730.58 926.62,735.20 922.77,739.06 924.91,744.23 930.36,744.23 930.36,750.77 924.91,750.77 922.77,755.94 926.62,759.80 922.00,764.42 918.14,760.57 912.97,762.71 912.97,768.16 906.43,768.16 906.43,762.71 901.26,760.57 897.40,764.42 892.78,759.80 896.63,755.94 894.49,750.77 889.04,750.77 889.04,744.23 894.49,744.23 896.63,739.06 892.78,735.20 897.40,730.58 901.26,734.43" fill="#00ffff"/><circle cx="909.2" cy="747.5" r="3.46" fill="none" stroke="#004a4a" stroke-width="0.9"/><ellipse cx="958.2" cy="745.9" rx="22.40" ry="22.90" fill="#000"/><polygon points="955.41,730.63 955.41,725.15 961.99,725.15 961.99,730.63 967.18,732.77 971.05,728.90 975.70,733.55 971.83,737.42 973.97,742.61 979.45,742.61 979.45,749.19 973.97,749.19 971.83,754.38 975.70,758.25 971.05,762.90 967.18,759.03 961.99,761.17 961.99,766.65 955.41,766.65 955.41,761.17 950.22,759.03 946.35,762.90 941.70,758.25 945.57,754.38 943.43,749.19 937.95,749.19 937.95,742.61 943.43,742.61 945.57,737.42 941.70,733.55 946.35,728.90 950.22,732.77" fill="#00ffff"/><circle cx="958.2" cy="745.9" r="3.48" fill="none" stroke="#004a4a" stroke-width="0.9"/><rect x="592.5" y="404" width="32" height="11" fill="#33cc33" stroke="#25802a" stroke-width="0.9"/><rect x="688.7" y="404" width="32" height="11" fill="#33cc33" stroke="#25802a" stroke-width="0.9"/><rect x="543.9000000000001" y="418.7" width="26.6" height="11" fill="#33cc33" stroke="#25802a" stroke-width="0.9" transform="rotate(-45 557.2 424.2)"/><rect x="733.8" y="413.4" width="31.4" height="10.6" fill="#33cc33" stroke="#25802a" stroke-width="0.9" transform="rotate(40 749.5 418.7)"/><rect x="533.7" y="470" width="11" height="27.6" fill="#33cc33" stroke="#25802a" stroke-width="0.9"/><rect x="533.7" y="526" width="11" height="27.5" fill="#33cc33" stroke="#25802a" stroke-width="0.9"/><rect x="760.6" y="466" width="11.9" height="27.4" fill="#33cc33" stroke="#25802a" stroke-width="0.9"/><rect x="760.6" y="518.1" width="11.9" height="27.2" fill="#33cc33" stroke="#25802a" stroke-width="0.9"/><rect x="533.8" y="626.3" width="10.8" height="23" fill="#33cc33" stroke="#25802a" stroke-width="0.9"/><rect x="533.8" y="702.5" width="10.8" height="22.5" fill="#33cc33" stroke="#25802a" stroke-width="0.9"/><rect x="548.8" y="786.3" width="31.8" height="11.2" fill="#33cc33" stroke="#25802a" stroke-width="0.9"/><rect x="588.8" y="786.3" width="31.8" height="11.2" fill="#33cc33" stroke="#25802a" stroke-width="0.9"/><rect x="644.5" y="786.3" width="31.8" height="11.2" fill="#33cc33" stroke="#25802a" stroke-width="0.9"/><rect x="685" y="786.3" width="31.8" height="11.2" fill="#33cc33" stroke="#25802a" stroke-width="0.9"/><rect x="816.9" y="786.3" width="31.6" height="11.2" fill="#33cc33" stroke="#25802a" stroke-width="0.9"/><rect x="856.7" y="786.3" width="31.6" height="11.2" fill="#33cc33" stroke="#25802a" stroke-width="0.9"/><rect x="916.7" y="786.3" width="31.6" height="11.2" fill="#33cc33" stroke="#25802a" stroke-width="0.9"/><rect x="819.9" y="635.4" width="31.7" height="11" fill="#33cc33" stroke="#25802a" stroke-width="0.9"/><rect x="908.3" y="683" width="31.3" height="11" fill="#33cc33" stroke="#25802a" stroke-width="0.9"/><rect x="510.8" y="766.3" width="180.5" height="12.5" fill="#000"/><path d="M516,773 H557" stroke="#00f0f8" stroke-width="2" fill="none"/><path d="M513,773 L524,771.7 V774.3 Z" fill="#00f0f8"/><path d="M517.5,772.4 L529,768.6 M517.5,773.6 L529,777.4" stroke="#00b4bc" stroke-width="1" fill="none"/><path d="M954.5,774.8 H998.3" stroke="#00f0f8" stroke-width="2" fill="none"/><path d="M951.5,774.8 L962.5,773.5 V776.0999999999999 Z" fill="#00f0f8"/><path d="M956.0,774.1999999999999 L970,770.4 M956.0,775.4 L970,779.1999999999999" stroke="#00b4bc" stroke-width="1" fill="none"/><path d="M519.6,717 H525 V726 C525,731 527.4,733 527.4,738 V763 Q527.4,765.3 525,765.3 H519.4 Q517,765.3 517,763 V738 C517,733 519.6,731 519.6,726 Z" fill="#f6f640" stroke="#c4bc24" stroke-width="0.8"/><rect x="519.6" y="738" width="3.6" height="25" fill="#ffff8c" opacity="0.8"/><rect x="519" y="716.4" width="6.6" height="3" fill="#e0e060" stroke="#a8a020" stroke-width="0.5"/><path d="M985.7,719.5 H991 V729 C991,735 993.5,737 993.5,742 V766.5 Q993.5,769.3 991,769.3 H985.6 Q983,769.3 983,766.5 V742 C983,737 985.7,735 985.7,729 Z" fill="#a6a6aa" stroke="#707074" stroke-width="0.8"/><rect x="986.3" y="744" width="3.6" height="22" fill="#ececec"/><rect x="985" y="718.8" width="6.8" height="3.4" fill="#8a8a8e" stroke="#606064" stroke-width="0.5"/><g stroke-linejoin="round"><path d="M756.8,761.2 L758.9,762.6 V784.6 L756.8,785.2 Z" fill="#d0d0d0" stroke="#303030" stroke-width="0.7"/><path d="M726.8,760.6 H756.8 V785.2 H725.3 V762.2 Q725.3,760.6 726.8,760.6 Z" fill="#f2f2f2" stroke="#303030" stroke-width="0.9"/><rect x="729.4" y="764.4" width="22.5" height="17.9" fill="#0032a0" stroke="#333" stroke-width="0.5"/><path d="M730,782.1 H751" stroke="#b4b4ff" stroke-width="0.9"/><path d="M740.2,773.8 L747.4,767.2 M741.4,776.4 L748.6,769.2 M742.6,775.2 L747.8,770.2" stroke="#dfe6ff" stroke-width="0.6" fill="none"/><path d="M730.5,785.2 H752 V786.6 H730.5 Z" fill="#c8c8c8" stroke="#3a3a3a" stroke-width="0.5"/><path d="M719.3,788 L722.6,786.2 H766.4 L762.5,788 Z" fill="#dedede" stroke="#303030" stroke-width="0.7"/><path d="M762.5,788 L766.4,786.2 V794.6 L762.5,796.8 Z" fill="#e8e8e8" stroke="#303030" stroke-width="0.7"/><rect x="719.3" y="788" width="43.2" height="8.8" fill="#f6f6f6" stroke="#303030" stroke-width="0.9"/><rect x="722" y="790.6" width="10" height="3.4" fill="#d4d4d4"/><path d="M722,789.5 H732" stroke="#c4c4c4" stroke-width="0.6"/><rect x="752.4" y="792.2" width="7.4" height="1.4" fill="#c8c8c8"/><path d="M750,789.4 H760" stroke="#aaa" stroke-width="0.7"/><path d="M725,796.9 H757.6 L754.5,801.7 H720.3 Z" fill="#c2c2c2" stroke="#303030" stroke-width="0.8"/></g><path d="M759.3,755 V790.3" stroke="#222" stroke-width="1" fill="none"/></svg>
<span class="t" style="left:615.30px;top:457.15px;font:400 12.5px/1 'Liberation Sans',sans-serif;color:#000;transform-origin:0 0;transform:scaleX(0.9440);">Filling machine</span>
<span class="t" style="left:574.40px;top:496.85px;font:400 12.5px/1 'Liberation Sans',sans-serif;color:#000;transform-origin:0 0;transform:scaleX(0.9610);">The current location:</span>
<span class="t" style="left:585.70px;top:526.95px;font:400 12.5px/1 'Liberation Sans',sans-serif;color:#000;transform-origin:0 0;transform:scaleX(0.9614);">The current Angle:</span>
<span class="t" style="left:693.50px;top:496.85px;font:400 12.5px/1 'Liberation Sans',sans-serif;color:#ffff00;letter-spacing:0.981px;-webkit-text-stroke:0.3px #ffff00;transform-origin:0 0;transform:scaleX(1.04);">##</span>
<span class="t" style="left:691.00px;top:526.95px;font:400 12.5px/1 'Liberation Sans',sans-serif;color:#ffff00;letter-spacing:0.837px;-webkit-text-stroke:0.3px #ffff00;transform-origin:0 0;transform:scaleX(1.04);">###</span>
<span class="t" style="left:712.60px;top:524.35px;font:400 12.5px/1 'Liberation Sans',sans-serif;color:#000;">°</span>
<span class="t" style="left:553.80px;top:707.35px;font:400 12.5px/1 'Liberation Sans',sans-serif;color:#000;transform-origin:0 0;transform:scaleX(0.9244);">Cap screwing</span>
<span class="t" style="left:567.00px;top:722.15px;font:400 12.5px/1 'Liberation Sans',sans-serif;color:#000;transform-origin:0 0;transform:scaleX(0.9207);">machine</span>
<span class="t" style="left:598.50px;top:387.50px;font:400 16px/1 'Liberation Sans',sans-serif;color:#000;transform-origin:0 0;transform:scaleX(0.8709);">14</span>
<span class="t" style="left:694.20px;top:387.50px;font:400 16px/1 'Liberation Sans',sans-serif;color:#000;transform-origin:0 0;transform:scaleX(0.9103);">13</span>
<span class="t" style="left:538.30px;top:407.20px;font:400 16px/1 'Liberation Sans',sans-serif;color:#000;transform-origin:0 0;transform:scaleX(0.9046);">15</span>
<span class="t" style="left:753.70px;top:402.80px;font:400 16px/1 'Liberation Sans',sans-serif;color:#000;transform-origin:0 0;transform:scaleX(0.8766);">12</span>
<span class="t" style="left:516.50px;top:475.30px;font:400 16px/1 'Liberation Sans',sans-serif;color:#000;transform-origin:0 0;transform:scaleX(0.8878);">16</span>
<span class="t" style="left:517.00px;top:531.70px;font:400 16px/1 'Liberation Sans',sans-serif;color:#000;transform-origin:0 0;transform:scaleX(0.8597);">17</span>
<span class="t" style="left:774.10px;top:474.60px;font:400 16px/1 'Liberation Sans',sans-serif;color:#000;transform-origin:0 0;transform:scaleX(0.9332);">11</span>
<span class="t" style="left:774.10px;top:522.30px;font:400 16px/1 'Liberation Sans',sans-serif;color:#000;transform-origin:0 0;transform:scaleX(0.8934);">10</span>
<span class="t" style="left:516.80px;top:631.10px;font:400 16px/1 'Liberation Sans',sans-serif;color:#000;transform-origin:0 0;transform:scaleX(0.8541);">18</span>
<span class="t" style="left:516.80px;top:702.80px;font:400 16px/1 'Liberation Sans',sans-serif;color:#000;transform-origin:0 0;transform:scaleX(0.8541);">19</span>
<span class="t" style="left:557.55px;top:799.10px;font:400 16px/1 'Liberation Sans',sans-serif;color:#000;">1</span>
<span class="t" style="left:600.95px;top:799.10px;font:400 16px/1 'Liberation Sans',sans-serif;color:#000;">2</span>
<span class="t" style="left:655.55px;top:799.10px;font:400 16px/1 'Liberation Sans',sans-serif;color:#000;">3</span>
<span class="t" style="left:695.55px;top:799.10px;font:400 16px/1 'Liberation Sans',sans-serif;color:#000;">4</span>
<span class="t" style="left:826.55px;top:799.30px;font:400 16px/1 'Liberation Sans',sans-serif;color:#000;">5</span>
<span class="t" style="left:869.85px;top:799.30px;font:400 16px/1 'Liberation Sans',sans-serif;color:#000;">6</span>
<span class="t" style="left:929.75px;top:799.30px;font:400 16px/1 'Liberation Sans',sans-serif;color:#000;">7</span>
<span class="t" style="left:833.35px;top:618.30px;font:400 16px/1 'Liberation Sans',sans-serif;color:#000;">9</span>
<span class="t" style="left:917.15px;top:666.60px;font:400 16px/1 'Liberation Sans',sans-serif;color:#000;">8</span>
<div class="r" style="left:996.2px;top:534px;width:244.8px;height:223.5px;background:#99ccff;border:1px solid #2c3c50"></div>
<span class="t" style="left:1004.00px;top:545.85px;font:400 12.5px/1 'Liberation Sans',sans-serif;color:#000;transform-origin:0 0;transform:scaleX(0.9694);">In fact Filling pressure tank</span>
<span class="t" style="left:1164.40px;top:546.35px;font:400 12.5px/1 'Liberation Sans',sans-serif;color:#000;letter-spacing:0.838px;transform-origin:0 0;transform:scaleX(1.06);">#.###</span>
<span class="t" style="left:1213.20px;top:546.15px;font:400 12.5px/1 'Liberation Sans',sans-serif;color:#000;transform-origin:0 0;transform:scaleX(0.9048);">Bar</span>
<span class="t" style="left:1021.70px;top:585.95px;font:400 12.5px/1 'Liberation Sans',sans-serif;color:#000;transform-origin:0 0;transform:scaleX(0.9783);">In fact Filling  level tank</span>
<span class="t" style="left:1166.40px;top:586.45px;font:400 12.5px/1 'Liberation Sans',sans-serif;color:#000;letter-spacing:0.902px;transform-origin:0 0;transform:scaleX(1.06);">####</span>
<span class="t" style="left:1216.60px;top:586.25px;font:400 12.5px/1 'Liberation Sans',sans-serif;color:#000;transform-origin:0 0;transform:scaleX(0.9717);">%</span>
<span class="t" style="left:1002.50px;top:626.05px;font:400 12.5px/1 'Liberation Sans',sans-serif;color:#000;transform-origin:0 0;transform:scaleX(0.9659);">Filling the pipe temperature</span>
<span class="t" style="left:1164.40px;top:626.55px;font:400 12.5px/1 'Liberation Sans',sans-serif;color:#000;letter-spacing:0.838px;transform-origin:0 0;transform:scaleX(1.06);">###.#</span>
<span class="t" style="left:1216.00px;top:626.35px;font:400 12.5px/1 'Liberation Sans',sans-serif;color:#000;transform-origin:0 0;transform:scaleX(0.8912);">°C</span>
<span class="t" style="left:1011.80px;top:698.15px;font:400 12.5px/1 'Liberation Sans',sans-serif;color:#000;transform-origin:0 0;transform:scaleX(0.9525);">Seting High pressure tank</span>
<span class="t" style="left:1168.60px;top:698.65px;font:400 12.5px/1 'Liberation Sans',sans-serif;color:#000;letter-spacing:0.710px;transform-origin:0 0;transform:scaleX(1.06);">#.##</span>
<span class="t" style="left:1213.20px;top:698.45px;font:400 12.5px/1 'Liberation Sans',sans-serif;color:#000;transform-origin:0 0;transform:scaleX(0.9048);">Bar</span>
<span class="t" style="left:1010.40px;top:736.25px;font:400 12.5px/1 'Liberation Sans',sans-serif;color:#000;transform-origin:0 0;transform:scaleX(0.9717);">In fact High pressure tank</span>
<span class="t" style="left:1164.40px;top:738.25px;font:400 12.5px/1 'Liberation Sans',sans-serif;color:#000;letter-spacing:0.838px;transform-origin:0 0;transform:scaleX(1.06);">#.###</span>
<span class="t" style="left:1213.20px;top:737.25px;font:400 12.5px/1 'Liberation Sans',sans-serif;color:#000;transform-origin:0 0;transform:scaleX(0.9048);">Bar</span>
<div class="r rb" style="left:1295px;top:530.3000000000001px;width:51px;height:50.8px"></div>
<div class="r rbi" style="left:1300.4px;top:535.5px;width:40.2px;height:40.8px"></div>
<span class="t" style="left:1272.60px;top:549.85px;font:400 12.5px/1 'Liberation Sans',sans-serif;color:#000;-webkit-text-stroke:0.2px #000;transform-origin:0 0;transform:scaleX(0.9504);">Online to prepare</span>
<div class="r rb" style="left:1295px;top:590.2px;width:51px;height:50.8px"></div>
<div class="r rbi" style="left:1300.4px;top:595.4px;width:40.2px;height:40.8px"></div>
<span class="t" style="left:1282.20px;top:610.85px;font:400 12.5px/1 'Liberation Sans',sans-serif;color:#000;-webkit-text-stroke:0.2px #000;transform-origin:0 0;transform:scaleX(0.9272);">Pause to suck</span>
<div class="r rb" style="left:1295px;top:647.6px;width:51px;height:50.8px"></div>
<div class="r rbi" style="left:1300.4px;top:652.8px;width:40.2px;height:40.8px"></div>
<span class="t" style="left:1269.70px;top:667.05px;font:400 12.5px/1 'Liberation Sans',sans-serif;color:#000;-webkit-text-stroke:0.2px #000;transform-origin:0 0;transform:scaleX(0.9278);">Stop Product Feed</span>
<div class="r rb" style="left:1295px;top:706.1px;width:51px;height:50.8px"></div>
<div class="r rbi" style="left:1300.4px;top:711.3px;width:40.2px;height:40.8px"></div>
<span class="t" style="left:1272.60px;top:725.85px;font:400 12.5px/1 'Liberation Sans',sans-serif;color:#000;-webkit-text-stroke:0.2px #000;transform-origin:0 0;transform:scaleX(0.9049);">Stop Cap Release</span>
<div class="r rb" style="left:1295px;top:764.8000000000001px;width:51px;height:50.8px"></div>
<div class="r rbi" style="left:1300.4px;top:770.0px;width:40.2px;height:40.8px"></div>
<span class="t" style="left:1276.50px;top:784.55px;font:400 12.5px/1 'Liberation Sans',sans-serif;color:#000;-webkit-text-stroke:0.2px #000;transform-origin:0 0;transform:scaleX(0.9781);">Stop Into Bottle</span>
</div></body></html>
